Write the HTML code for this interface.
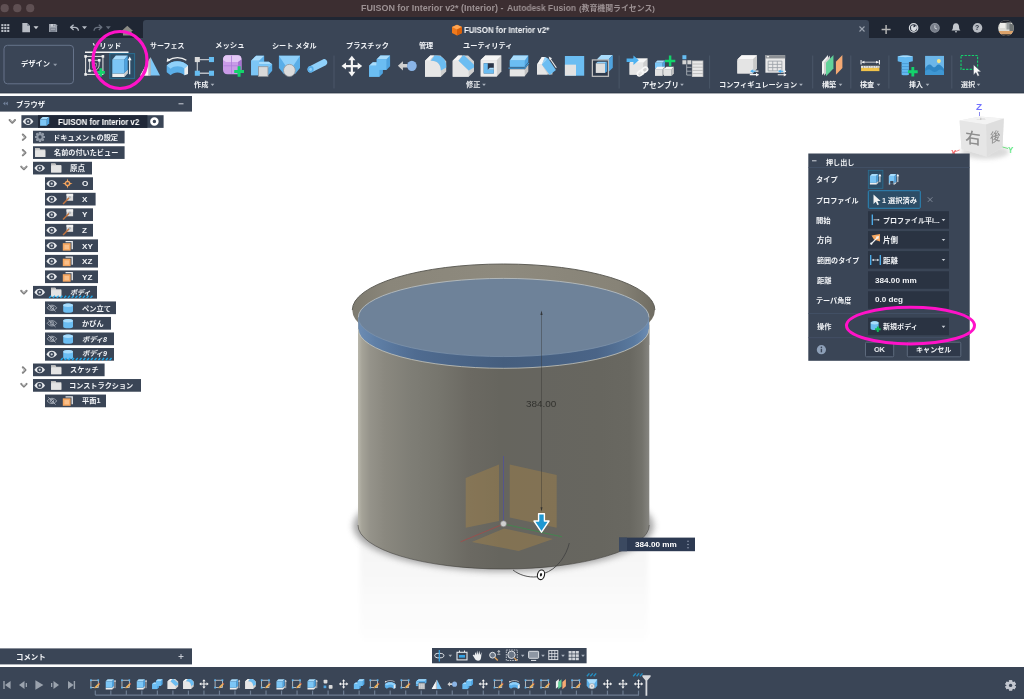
<!DOCTYPE html>
<html lang="ja"><head><meta charset="utf-8"><title>FUISON for Interior v2* (Interior) - Autodesk Fusion</title>
<style>
html,body{margin:0;padding:0;background:#fff;}
body{width:1024px;height:699px;overflow:hidden;position:relative;font-family:"Liberation Sans","Noto Sans CJK JP",sans-serif;}
#app{position:absolute;left:0;top:0;width:1024px;height:699px;overflow:hidden;background:#fff;}
.t{will-change:transform;}
svg.l{position:absolute;left:0;top:0;will-change:transform;}
.t{position:absolute;white-space:nowrap;letter-spacing:0;}
</style></head><body><div id="app">
<svg class="l" width="1024" height="699" viewBox="0 0 1024 699">
<defs>
<linearGradient id="gb" gradientUnits="userSpaceOnUse" x1="357.5" x2="649.5" y1="0" y2="0"><stop offset="0.0017" stop-color="#b9b7ac"/><stop offset="0.0154" stop-color="#a5a398"/><stop offset="0.0428" stop-color="#95938a"/><stop offset="0.0942" stop-color="#8a887f"/><stop offset="0.1798" stop-color="#7f7e76"/><stop offset="0.2825" stop-color="#76756d"/><stop offset="0.3853" stop-color="#6b6962"/><stop offset="0.4880" stop-color="#66655e"/><stop offset="0.6250" stop-color="#66655f"/><stop offset="0.8305" stop-color="#67665f"/><stop offset="0.9332" stop-color="#696861"/><stop offset="0.9743" stop-color="#73726b"/><stop offset="0.9993" stop-color="#868580"/></linearGradient>
<linearGradient id="gband" gradientUnits="userSpaceOnUse" x1="358" x2="649" y1="0" y2="0"><stop offset="0" stop-color="#6d8db4"/><stop offset="0.06" stop-color="#5f7fa6"/><stop offset="0.2" stop-color="#4f6b90"/><stop offset="0.5" stop-color="#455e7e"/><stop offset="0.82" stop-color="#4a6487"/><stop offset="0.95" stop-color="#5a7a9f"/><stop offset="1" stop-color="#6d8db4"/></linearGradient>
<linearGradient id="grim" gradientUnits="userSpaceOnUse" x1="352" x2="655" y1="0" y2="0">
<stop offset="0" stop-color="#7d7a6f"/><stop offset="0.12" stop-color="#8a867a"/><stop offset="0.5" stop-color="#8e8a7e"/><stop offset="0.88" stop-color="#878377"/><stop offset="1" stop-color="#6f6c62"/>
</linearGradient>
<linearGradient id="gr" x1="0" x2="0" y1="0" y2="1"><stop offset="0" stop-color="#f4f4f4"/><stop offset="0.5" stop-color="#f8f8f8"/><stop offset="1" stop-color="#fefefe"/></linearGradient>
<filter id="bl" x="-20%" y="-20%" width="140%" height="140%"><feGaussianBlur stdDeviation="3"/></filter>
<filter id="bl2" x="-30%" y="-30%" width="160%" height="160%"><feGaussianBlur stdDeviation="2"/></filter>
</defs>
<rect x="0" y="0" width="1024" height="17" fill="#3c2e31" />
<circle cx="4.7" cy="8.2" r="4.1" fill="#5f5053"/>
<circle cx="17.3" cy="8.2" r="4.1" fill="#5f5053"/>
<circle cx="30.2" cy="8.2" r="4.1" fill="#5f5053"/>
<rect x="0" y="17" width="1024" height="21" fill="#1f2633" />
<path d="M143 38v-15a3 3 0 0 1 3-3h720a3 3 0 0 1 3 3v15z" fill="#3a4556"/>
<rect x="1.3" y="24.1" width="2.1" height="2.1" fill="#b9bec6" />
<rect x="1.3" y="27.0" width="2.1" height="2.1" fill="#b9bec6" />
<rect x="1.3" y="29.9" width="2.1" height="2.1" fill="#b9bec6" />
<rect x="4.25" y="24.1" width="2.1" height="2.1" fill="#b9bec6" />
<rect x="4.25" y="27.0" width="2.1" height="2.1" fill="#b9bec6" />
<rect x="4.25" y="29.9" width="2.1" height="2.1" fill="#b9bec6" />
<rect x="7.2" y="24.1" width="2.1" height="2.1" fill="#b9bec6" />
<rect x="7.2" y="27.0" width="2.1" height="2.1" fill="#b9bec6" />
<rect x="7.2" y="29.9" width="2.1" height="2.1" fill="#b9bec6" />
<path d="M22.3 23.1h4.800l2.900 2.900v6.300h-7.700z" fill="#b7bcc4"/><path d="M27.100 23.100v2.900h2.900z" fill="#7f8794"/>
<path d="M33.5 26.2h5l-2.5 3z" fill="#c8ccd2"/>
<path d="M49 24h6.900l1.200 1.200v6.700h-8.100z" fill="#9aa0aa"/><rect x="50.700" y="24" width="4.300" height="2.600" fill="#c9cdd3"/><rect x="53.300" y="24.400" width="1.100" height="1.800" fill="#6a7180"/><rect x="50.300" y="28" width="5.500" height="3.900" fill="#7b828f"/><rect x="51" y="28.800" width="4.100" height=".8" fill="#b7bcc4"/>
<path d="M73.600 24.700l-3 2.600 3 2.600M71 27.300h3.600c2.200 0 3.600 1.200 3.800 3.400" fill="none" stroke="#b4bac3" stroke-width="1.300" stroke-linejoin="round"/>
<path d="M82.0 26.2h5l-2.5 3z" fill="#b4bac3"/>
<path d="M98.800 24.700l3 2.600-3 2.600M101.400 27.300h-3.600c-2.200 0-3.600 1.200-3.800 3.400" fill="none" stroke="#68707e" stroke-width="1.300" stroke-linejoin="round"/>
<path d="M105.8 26.2h5l-2.5 3z" fill="#646c7a"/>
<path d="M121.500 31l5.800-5.300 5.800 5.300h-1.500v4.500h-8.600v-4.500z" fill="#8b8b84"/>
<g transform="translate(452 24.5) scale(1)"><path d="M0 2.600l5-2.400 5 2.400v5.800l-5 2.600-5-2.600z" fill="#f07a1c"/><path d="M0 2.600l5-2.400 5 2.400-5 2.500z" fill="#ffa552"/><path d="M5 5.100l5-2.500v5.800l-5 2.600z" fill="#d8600a"/></g>
<path d="M859.500 26.500l5 5M864.500 26.500l-5 5" stroke="#9aa2ae" stroke-width="1.100"/>
<path d="M881.6 29.500h9M886.100 25v9" stroke="#b4b4b4" stroke-width="1.500"/>
<circle cx="913.6" cy="27.900" r="4.200" fill="#2a3240" stroke="#d8dbe0" stroke-width="1.200"/><path d="M911 26.500c.8-1.200 1.800-1.500 2.800-1l-.6 1.800 1.800-.4.900-1.600c1 .900 1.300 2.200.8 3.600l-1.700 1.900c-1.500.6-2.900.200-3.800-1z" fill="#d8dbe0"/>
<circle cx="934.9" cy="27.900" r="4.300" fill="#767c88" stroke="#8d939d" stroke-width="1.100"/><path d="M934.900 25.300v2.900l2.100.8" stroke="#c9cdd3" stroke-width="1" fill="none"/>
<path d="M956 23.300c2.300 0 3.100 1.900 3.100 4.100c0 1.500.7 2.300 1.400 3h-9c.7-.7 1.400-1.500 1.400-3c0-2.200.8-4.100 3.100-4.100z" fill="#c3c7cd"/><rect x="955.100" y="30.900" width="1.800" height="1.500" rx=".7" fill="#c3c7cd"/>
<circle cx="977.5" cy="27.900" r="4.800" fill="#b7bbc2"/>
<clipPath id="av"><circle cx="1006" cy="28.100" r="7.900"/></clipPath><g clip-path="url(#av)"><rect x="998" y="20" width="16" height="17" fill="#dcdcd6"/><rect x="998" y="20" width="16" height="2.800" fill="#1d2027"/><rect x="1006.500" y="22.500" width="4.500" height="7" fill="#9a9f9f"/><rect x="1000" y="23" width="5" height="5" fill="#eeeeea"/><rect x="1009.500" y="24" width="4.500" height="7" fill="#6f7474"/><rect x="998" y="31" width="16" height="3.600" fill="#dba26a"/><rect x="998" y="34.300" width="16" height="3" fill="#2a2624"/></g>
<rect x="0" y="38" width="1024" height="55" fill="#3a4556" />
<rect x="0" y="92.6" width="1024" height="0.8" fill="#2a3342" />
<rect x="4" y="45.300" width="69.500" height="38.500" rx="3.500" fill="none" stroke="#66738a" stroke-width="1"/>
<path d="M53.2 63.8h4l-2.0 2.4z" fill="#8e98a6"/>
<rect x="85" y="51.5" width="43.5" height="1.5" fill="#f5f5f5" />
<rect x="109.800" y="53.600" width="24.800" height="24.800" fill="#2d4d66" stroke="#2b6f92" stroke-width="1"/>
<g transform="translate(84.00 54.80) scale(0.9952 1.0000)"><rect x="1.600" y="1.600" width="17.400" height="18" fill="none" stroke="#dcdcdc" stroke-width="1.100"/><path d="M5.500 5.500h9.800v4.500a6 6 0 0 1-6 6h-3.800z" fill="none" stroke="#c4c8cc" stroke-width="1"/><path d="M8.500 8.500h4v2a2.500 2.500 0 0 1-2.500 2.500h-1.500z" fill="none" stroke="#aeb3b9" stroke-width=".800"/><rect x="0.30000000000000004" y="0.30000000000000004" width="2.600" height="2.600" fill="#f2f2f2"/><rect x="17.7" y="0.30000000000000004" width="2.600" height="2.600" fill="#f2f2f2"/><rect x="0.30000000000000004" y="18.3" width="2.600" height="2.600" fill="#f2f2f2"/><rect x="4.2" y="4.2" width="2.600" height="2.600" fill="#f2f2f2"/><rect x="14.0" y="4.2" width="2.600" height="2.600" fill="#f2f2f2"/><rect x="4.2" y="14.7" width="2.600" height="2.600" fill="#f2f2f2"/><path d="M12.600 17.600h8.400M16.800 13.400v8.400" stroke="#13d36b" stroke-width="2.700"/></g>
<g transform="translate(110.20 54.63) scale(0.9554 1.0918)"><path d="M2.2 17.2h12.4l3.6-3.4v3.2l-3.6 3.4h-12.4z" fill="#efefef"/><path d="M14.6 17.2l3.6-3.4v3.2l-3.6 3.4z" fill="#c9c9c9"/><path d="M2.2 4.6l3.7 -3.7h12.4l-3.7 3.7z" fill="#a9dcfb"/><path d="M14.600000000000001 4.6l3.7 -3.7v12.6l-3.7 3.7z" fill="#4fa3df"/><rect x="2.2" y="4.6" width="12.4" height="12.6" fill="#7cc6f6"/><path d="M20.4 4v14" stroke="#fff" stroke-width="1.2"/><path d="M20.4 1.8l2 3.4h-4z" fill="#fff"/></g>
<g transform="translate(139.26 55.11) scale(0.9429 0.9946)"><path d="M12 2.2L1 20.6h11z" fill="#ececec"/><path d="M9.6 6.4L1 20.6h8.6z" fill="#f7f7f7"/><path d="M12 2.2l10 18.4h-10z" fill="#7cc6f6"/><path d="M9.6 6.2v14.4h2.4v-18.4z" fill="#b7bcc2"/></g>
<g transform="translate(166.09 55.69) scale(1.0143 1.0110)"><path d="M0.600 9.800C6 4.200 16 4.200 21.600 9.800V18L18 19.300C14.500 15.800 8 15.800 4.500 19.300L0.600 16.500Z" fill="#5aaee8"/><path d="M0.600 9.800C6 4.200 16 4.200 21.600 9.800L18 12.600C14.500 9.800 8 9.800 4.500 12.800Z" fill="#8fd0fa"/><path d="M18 12.600L21.600 9.800V18L18 19.300Z" fill="#ececec"/><path d="M2.200 4.600C7.500 0.900 15 0.900 20 4.600" fill="none" stroke="#f2f2f2" stroke-width="1.200"/><path d="M0.500 6.200l.8-3.900 3.100 2.500z" fill="#f2f2f2"/></g>
<g transform="translate(193.83 55.04) scale(0.9697 0.9792)"><path d="M3.6 4.6h15M3.6 18.6h15M3.6 4.6v14" stroke="#b9bec5" stroke-width="1.3" fill="none"/><rect x="1" y="2" width="5.2" height="5.2" fill="#dadada"/><rect x="15.6" y="2" width="5.2" height="5.2" fill="#66bdf2"/><rect x="1" y="16" width="5.2" height="5.2" fill="#66bdf2"/><rect x="15.6" y="16" width="5.2" height="5.2" fill="#66bdf2"/></g>
<g transform="translate(222.00 53.08) scale(1.0000 1.0588)"><path d="M5 2h10.5c2.6 0 4 1.4 4 4v9c0 3-1.6 5-4.6 5h-9.400c-3 0-4.500-1.600-4.500-4.500v-9c0-3 1.500-4.500 4-4.500z" fill="#c99be8"/><path d="M5 2h10.500c2.600 0 4 1.400 4 4l-3.500 2.500h-12l-3-2c0-3 1.500-4.500 4-4.500z" fill="#e3c8f5"/><path d="M16 8.5l3.500-2.500v9c0 3-1.600 5-4.600 5l1.100-2z" fill="#a874d2"/><path d="M9.500 2.500v17M1.500 12h17" stroke="#b07fdc" stroke-width=".8" fill="none"/><path d="M12.200 17.400h9.800M17.100 12.500v9.800" stroke="#13d36b" stroke-width="3"/></g>
<g transform="translate(250.60 55.20) scale(1.0047 1.0000)"><path d="M0.500 5.500l5-5h8v6h4.500l3.500 2.500v6.500l-4 4.500h-17z" fill="#5aaee8"/><path d="M0.500 5.500l5-5h8l-5 5z" fill="#a9dcfb"/><path d="M8.500 6.500h9.500l3.500 2.500h-14z" fill="#a9dcfb"/><path d="M0.500 5.500h8v3.500h13l-4 4h-10v7h-7z" fill="#7cc6f6"/><rect x="7.800" y="11.500" width="9.500" height="9.700" fill="#d9d9d9" stroke="#8f959c" stroke-width=".800"/></g>
<g transform="translate(278.41 54.17) scale(0.9815 1.0190)"><path d="M0.500 1.500h21.500v12l-5 6h-11.500l-5-6z" fill="#5aaee8"/><path d="M0.500 1.500h21.500l-7 10h-7.500z" fill="#8fd0fa"/><circle cx="11.200" cy="16" r="6" fill="#dcdcdc" stroke="#8f959c" stroke-width=".8"/></g>
<g transform="translate(305.82 52.47) scale(1.0474 1.0538)"><path d="M3.200 13.200l13.500-6.700c2.800-1.300 5.600 3.600 2.400 5.600l-13.300 6.700c-3.600 1.500-5.800-3.600-2.600-5.600z" fill="#8fd0fa"/><ellipse cx="4.600" cy="16" rx="2.900" ry="3.100" fill="#5aaee8"/><ellipse cx="4.600" cy="16" rx="1.300" ry="1.500" fill="#8fd0fa"/></g>
<g transform="translate(341.01 55.21) scale(0.9856 0.9856)"><path d="M11 0.500l3.600 4.600h-2.500v4.800h4.800v-2.500l4.600 3.600-4.600 3.600v-2.500h-4.800v4.800h2.500l-3.600 4.600-3.600-4.600h2.500v-4.800h-4.800v2.500l-4.600-3.600 4.600-3.600v2.500h4.800v-4.800h-2.500z" fill="#f5f5f5"/></g>
<g transform="translate(367.97 54.19) scale(1.0291 1.0095)"><path d="M8.500 5l3.600-3.600h9.400v10.600l-3.600 3.600h-3.400v3.400l-3.400 3.400h-10v-11l3.600-3.400h3.800z" fill="#4fa3df"/><path d="M8.500 5l3.600-3.600h9.400l-3.600 3.600z" fill="#a9dcfb"/><path d="M1.100 11.400l3.600-3.400h3.800v3.400z" fill="#a9dcfb"/><rect x="8.500" y="5" width="9.400" height="10.600" fill="#6bbdf2"/><rect x="1.100" y="11.400" width="10" height="11" fill="#6bbdf2"/></g>
<g transform="translate(397.45 55.16) scale(0.9126 0.9722)"><path d="M0.500 11l5.500-4.800v3h5v3.600h-5v3z" fill="#d0d0d0"/><circle cx="15.800" cy="11" r="5.300" fill="#8ab4e6"/></g>
<g transform="translate(423.94 54.57) scale(1.0600 1.0291)"><path d="M1 6l5-5h9.500l5.500 5.500v10l-5 5h-15z" fill="#cfcfcf"/><path d="M1 6l5-5h4c-3 2-4 4-4 5z" fill="#f6f6f6"/><path d="M1 6h5.500c5 0 9.500 3 9.500 9v6.500h-15z" fill="#e6e6e6"/><path d="M10 1h1.500c6 0 9.500 4.500 9.500 10v1.500l-5 3c0-6-3.500-10-9.500-9.500z" fill="#6bbdf2"/></g>
<g transform="translate(451.63 54.57) scale(1.0650 1.0291)"><path d="M1 6l5-5h9.500l5.500 5.500v10l-5 5h-15z" fill="#cfcfcf"/><path d="M1 6l5-5h4l-4 5z" fill="#f6f6f6"/><path d="M1 6h5.500l9.500 9.500v6h-15z" fill="#e6e6e6"/><path d="M10.500 1h1.500l9 9v2.500l-5 3-9.500-9.500z" fill="#6bbdf2"/></g>
<g transform="translate(479.69 54.48) scale(1.0097 1.0243)"><path d="M1 5.500l4.500-4.500h16v15.500l-4.500 5h-16z" fill="#d0d0d0"/><path d="M1 5.500l4.500-4.500h16l-4.500 4.500z" fill="#f6f6f6"/><rect x="1" y="5.500" width="16" height="16" fill="#ececec"/><rect x="4" y="8.500" width="10" height="10" fill="#2b3547"/><path d="M4 8.500h4v6.500h6v3.500h-10z" fill="#6bbdf2"/><path d="M8 15l2-2h4v2z" fill="#a9dcfb"/></g>
<g transform="translate(508.94 54.01) scale(0.9009 1.0612)"><path d="M1 6l4-4.500h16.500l-0 6-4 4.500h-16.500z" fill="#4fa3df"/><path d="M1 6l4-4.500h16.500l-4 4.500z" fill="#a9dcfb"/><rect x="1" y="6" width="16.500" height="6" fill="#6bbdf2"/><path d="M1 14.500h16.500l4-4.500v6.500l-4 4.500h-16.500z" fill="#c4c4c4"/><rect x="1" y="14.500" width="16.500" height="6.500" fill="#e6e6e6"/><path d="M-0.500 13.300h18l4.600-5" stroke="#3f9ad8" stroke-width="1.200" fill="none"/></g>
<g transform="translate(537.00 56.17) scale(0.8795 0.8318)"><path d="M0 10l5.500-9h4l8 14v7h-17.500z" fill="#d2d2d2"/><path d="M0 10l5.500-9h3.500l-3.500 9z" fill="#f6f6f6"/><path d="M0 10h5.500l6.500 12h-12z" fill="#e6e6e6"/><path d="M5.500 10l7-7.500 9 14-7 6z" fill="#6bbdf2"/><path d="M5.500 10l3.500-9 3.500 1.500z" fill="#8fd0fa"/><path d="M14.500 2.500l7.500 11.500" stroke="#f2f2f2" stroke-width="1.200"/><path d="M13.300 0.300l3.800 2.300-2.600 1.900z" fill="#f2f2f2"/></g>
<g transform="translate(563.93 55.04) scale(0.9650 0.9612)"><rect x="1" y="1" width="20" height="20.500" fill="#6bbdf2"/><rect x="1" y="10" width="11.500" height="11.500" fill="#e2e2e2"/></g>
<g transform="translate(591.41 54.61) scale(0.9722 0.9649)"><path d="M6 4.5l4 -4h12l-4 4z" fill="#a9dcfb"/><path d="M18 4.5l4 -4v13l-4 4z" fill="#4fa3df"/><rect x="6" y="4.5" width="12" height="13" fill="#7cc6f6"/><rect x="1" y="5.500" width="16.500" height="17" fill="#2f3a4b" stroke="#bfbfbf" stroke-width="1.300"/><rect x="4.500" y="9" width="9.500" height="10" fill="#dedede"/><path d="M14 9l2-1.500v10l-2 1.500z" fill="#4fa3df"/><path d="M4.500 9l2-1.500h9.500l-2 1.500z" fill="#8fd0fa"/></g>
<g transform="translate(626.60 54.54) scale(0.9777 0.9591)"><path d="M3 8.500l4.500-4.500h14v12.500l-4.500 4.500h-14z" fill="#cfcfcf"/><path d="M3 8.500l4.500-4.500h14l-4.500 4.500z" fill="#f6f6f6"/><rect x="3" y="8.500" width="14" height="12.500" fill="#e6e6e6"/><path d="M0 4.200h7v-3.200l5.500 5-5.500 5v-3.200h-7z" fill="#4fb2f0"/><g fill="none" stroke="#f7f7f7" stroke-width="1.700"><ellipse cx="14" cy="19.500" rx="3.300" ry="2.300" transform="rotate(-38 14 19.500)"/><ellipse cx="18.500" cy="16" rx="3.300" ry="2.300" transform="rotate(-38 18.500 16)"/></g></g>
<g transform="translate(654.06 55.11) scale(0.9444 0.9670)"><path d="M1 8l2.5 -2.5h8l-2.5 2.5z" fill="#a9dcfb"/><path d="M9 8l2.5 -2.5v6l-2.5 2.5z" fill="#4fa3df"/><rect x="1" y="8" width="8" height="6" fill="#7cc6f6"/><path d="M1 14.5l2.5 -2.5h8l-2.5 2.5z" fill="#f6f6f6"/><path d="M9 14.5l2.5 -2.5v7l-2.5 2.5z" fill="#c4c4c4"/><rect x="1" y="14.5" width="8" height="7" fill="#e2e2e2"/><path d="M10.5 14.5l2.5 -2.5h8l-2.5 2.5z" fill="#f6f6f6"/><path d="M18.5 14.5l2.5 -2.5v7l-2.5 2.5z" fill="#c4c4c4"/><rect x="10.5" y="14.5" width="8" height="7" fill="#e2e2e2"/><path d="M11.500 6h11M17 0.500v11" stroke="#13d36b" stroke-width="2.600"/></g>
<g transform="translate(681.92 54.71) scale(0.9505 0.9690)"><rect x="0.500" y="0.500" width="4.200" height="4.200" fill="#66bdf2"/><rect x="0.500" y="5.700" width="4.200" height="4.200" fill="#d6d6d6"/><rect x="5.700" y="5.700" width="4.200" height="4.200" fill="#d6d6d6"/><path d="M5 10v11M5 13h5M5 17h5M5 21h5" stroke="#aeb4bb" stroke-width=".900" fill="none"/><rect x="10.500" y="6" width="12" height="17" fill="#bdbdbd"/><rect x="11.300" y="6.8" width="10.400" height="2.300" fill="#e8e8e8"/><rect x="11.300" y="10.1" width="10.400" height="2.300" fill="#e8e8e8"/><rect x="11.300" y="13.399999999999999" width="10.400" height="2.300" fill="#e8e8e8"/><rect x="11.300" y="16.7" width="10.400" height="2.300" fill="#e8e8e8"/><rect x="11.300" y="20.0" width="10.400" height="2.300" fill="#e8e8e8"/></g>
<g transform="translate(736.34 53.78) scale(0.9598 0.9430)"><path d="M1 6l4.500-4.500h16v14.500l-4.500 5h-16z" fill="#c9c9c9"/><path d="M1 6l4.500-4.500h16l-4.500 4.500z" fill="#f8f8f8"/><path d="M3 6c0 0 0 0 0 0h14.500v15h-16.500v-13c0-1.500 1-2 2-2z" fill="#e4e4e4"/><path d="M14 18.500h9M14 22.200h9" stroke="#f2f2f2" stroke-width="1.300"/><path d="M17.500 16.500l-3 2 3 2z" fill="#4fb2f0"/><path d="M20.500 20.200l3 2-3 2z" fill="#f2f2f2"/><path d="M15 18.500h5" stroke="#4fb2f0" stroke-width="1.300"/></g>
<g transform="translate(764.93 54.17) scale(0.9174 0.9267)"><rect x="0.500" y="1" width="21.500" height="19" fill="#e9e9e9"/><rect x="0.500" y="1" width="21.500" height="3.600" fill="#8b8f94"/><rect x="2" y="2" width="2.500" height="1.400" fill="#e9e9e9"/><path d="M3.500 7.500h15v10.500h-15zM3.500 11h15M3.500 14.500h15M8.500 7.500v10.500M13.500 7.500v10.500" stroke="#9a9fa6" stroke-width=".900" fill="none"/><path d="M14 18.500h9M14 22.200h9" stroke="#f2f2f2" stroke-width="1.300"/><path d="M17.500 16.500l-3 2 3 2z" fill="#4fb2f0"/><path d="M20.500 20.200l3 2-3 2z" fill="#f2f2f2"/><path d="M15 18.500h5" stroke="#4fb2f0" stroke-width="1.300"/></g>
<g transform="translate(821.50 54.14) scale(0.9951 0.9587)"><path d="M0.500 8l6-7v14l-6 7z" fill="#f4f4f4"/><path d="M2.500 8.500l6-7v14l-6 7z" fill="#d0d0d0"/><path d="M4.500 9l7.500-8v14l-7.500 8z" fill="#62d29a"/><path d="M14.500 8l6.500-7v13.500l-6.500 7z" fill="#f5a973"/></g>
<g transform="translate(860.11 57.25) scale(0.9653 0.7500)"><rect x="1" y="11.500" width="19" height="7" fill="#f0c24a"/><rect x="1" y="11.500" width="19" height="2.600" fill="#e3e6ea"/><path d="M3.500 11.500v3M6 11.500v2M8.500 11.500v3M11 11.500v2M13.500 11.500v3M16 11.500v2M18.500 11.500v3" stroke="#6b7078" stroke-width=".600"/><path d="M1 3.500v6M20 3.500v6M2 6.500h17" stroke="#f2f2f2" stroke-width="1.100" fill="none"/><path d="M1.500 6.500l3-1.800v3.600zM19.500 6.500l-3-1.800v3.600z" fill="#f2f2f2"/></g>
<g transform="translate(896.72 54.92) scale(0.9757 0.9679)"><path d="M1 1.500c4-1.200 11-1.200 15.500 0v5c-1.500.5-3 .6-4 .8v13.200c-2 .8-6 .8-7.500 0v-13.200c-1.200-.1-3-.3-4-.8z" fill="#63b8f0"/><path d="M1 1.500c4-1.200 11-1.200 15.500 0c-4.500 1.200-11 1.200-15.500 0z" fill="#a9dcfb"/><path d="M5 9h7.500M5 12h7.500M5 15h7.500M5 18h7.500" stroke="#3f90cc" stroke-width=".700"/><path d="M11.500 17.400h10M16.500 12.400v10" stroke="#13d36b" stroke-width="2.900"/></g>
<g transform="translate(924.64 54.97) scale(0.9009 0.9272)"><rect x="0.500" y="1" width="21" height="20.500" fill="#6cb6e8"/><path d="M0.500 21.500v-7c2.500-4 5-5.500 7.500-3c2 2 3 2.500 5 0c2.500-2.500 5-1 8.500 3.500v6.500z" fill="#2f86c4"/><path d="M0.500 21.500v-4c3-2.500 5.500-2.500 8 0c2.500 1.500 4.500 1 6.500-1c2-1.500 4-1 6.500 1.500v3.500z" fill="#3f97d3"/><circle cx="15.800" cy="6.600" r="2.200" fill="#f4e58a"/></g>
<g transform="translate(959.98 54.46) scale(0.8719 0.8926)"><rect x="1.200" y="1.200" width="19" height="15.500" fill="none" stroke="#13d36b" stroke-width="1.300" stroke-dasharray="2.600 1.500"/><path d="M15.500 11.500v11.500l2.800-2.700 1.900 4.200 2-.9-1.900-4.100h4z" fill="#fafafa" stroke="#3a4556" stroke-width=".500"/></g>
<rect x="333.5" y="55.5" width="1" height="33" fill="#4a5668" />
<rect x="618.6" y="55.5" width="1" height="33" fill="#4a5668" />
<rect x="709.1" y="55.5" width="1" height="33" fill="#4a5668" />
<rect x="812.2" y="55.5" width="1" height="33" fill="#4a5668" />
<rect x="850.3" y="55.5" width="1" height="33" fill="#4a5668" />
<rect x="888.4" y="55.5" width="1" height="33" fill="#4a5668" />
<rect x="951.3" y="55.5" width="1" height="33" fill="#4a5668" />
<path d="M210.7 83.7h3.6l-1.8 2.2z" fill="#aab2bd"/>
<path d="M482.2 83.7h3.6l-1.8 2.2z" fill="#aab2bd"/>
<path d="M680.2 83.7h3.6l-1.8 2.2z" fill="#aab2bd"/>
<path d="M799.2 83.7h3.6l-1.8 2.2z" fill="#aab2bd"/>
<path d="M838.7 83.7h3.6l-1.8 2.2z" fill="#aab2bd"/>
<path d="M876.7 83.7h3.6l-1.8 2.2z" fill="#aab2bd"/>
<path d="M925.7 83.7h3.6l-1.8 2.2z" fill="#aab2bd"/>
<path d="M976.7 83.7h3.6l-1.8 2.2z" fill="#aab2bd"/>
<rect x="0" y="96" width="192" height="15.6" fill="#3a4556" />
<path d="M5.300 101.600v3.800l-2.300-1.900zM7.800 101.600v3.800l-2.300-1.900z" fill="#71809a"/>
<rect x="178.5" y="103.3" width="5" height="1" fill="#c9ced6" />
<rect x="21.4" y="115.2" width="142.2" height="12.7" fill="#3a4556" />
<path d="M9.599999999999998 120.05l2.7 2.700 2.700-2.700" stroke="#7d7d7d" stroke-width="2" fill="none" stroke-linejoin="round" stroke-linecap="round"/><path d="M10.099999999999998 119.94999999999999l2.200 2.200 2.200-2.200" stroke="#d9d9d9" stroke-width=".6" fill="none"/>
<g transform="translate(22.80 116.30) scale(0.8833 0.8750)"><path d="M0 6c3-5.300 9-5.300 12 0c-3 5.300-9 5.300-12 0z" fill="#e9ebee"/><circle cx="6" cy="6" r="2.900" fill="#3a4556"/><circle cx="6" cy="6" r="1.250" fill="#c9ced6"/></g>
<rect x="38" y="115.2" width="109.4" height="12.7" fill="#202838" />
<g transform="translate(39.67 116.53) scale(0.8304 0.8036)"><path d="M0.5 3.5l3 -3h8l-3 3z" fill="#a9dcfb"/><path d="M8.5 3.5l3 -3v8l-3 3z" fill="#4fa3df"/><rect x="0.5" y="3.5" width="8" height="8" fill="#7cc6f6"/></g>
<circle cx="154.4" cy="121.55" r="3" fill="none" stroke="#fff" stroke-width="2.5"/>
<rect x="33" y="130.72" width="91.6" height="12.7" fill="#3a4556" />
<path d="M22.8 134.47l2.700 2.700-2.700 2.700" stroke="#7d7d7d" stroke-width="2" fill="none" stroke-linejoin="round" stroke-linecap="round"/><path d="M22.7 134.97l2.200 2.200-2.200 2.200" stroke="#d9d9d9" stroke-width=".6" fill="none"/>
<g transform="translate(35.00 131.97) scale(0.8333 0.8333)"><g fill="#8f98a5"><rect x="4.700" y="0" width="2.600" height="12" rx=".500" transform="rotate(0 6 6)"/><rect x="4.700" y="0" width="2.600" height="12" rx=".500" transform="rotate(45 6 6)"/><rect x="4.700" y="0" width="2.600" height="12" rx=".500" transform="rotate(90 6 6)"/><rect x="4.700" y="0" width="2.600" height="12" rx=".500" transform="rotate(135 6 6)"/><rect x="4.700" y="0" width="2.600" height="12" rx=".500" transform="rotate(180 6 6)"/><rect x="4.700" y="0" width="2.600" height="12" rx=".500" transform="rotate(225 6 6)"/><rect x="4.700" y="0" width="2.600" height="12" rx=".500" transform="rotate(270 6 6)"/><rect x="4.700" y="0" width="2.600" height="12" rx=".500" transform="rotate(315 6 6)"/><circle cx="6" cy="6" r="4.400"/></g><circle cx="6" cy="6" r="2" fill="#3a4556"/></g>
<rect x="33" y="146.24" width="91.6" height="12.7" fill="#3a4556" />
<path d="M22.8 149.99l2.700 2.700-2.700 2.700" stroke="#7d7d7d" stroke-width="2" fill="none" stroke-linejoin="round" stroke-linecap="round"/><path d="M22.7 150.49l2.200 2.200-2.200 2.200" stroke="#d9d9d9" stroke-width=".6" fill="none"/>
<g transform="translate(34.63 146.70) scale(0.9286 0.9184)"><path d="M0.500 1.500h4.500l1 1.600h5.500v8h-11z" fill="#d8d8d8"/><path d="M0.500 4.200h11v6.900h-11z" fill="#e4e4e4"/><path d="M0.500 1.500h4.500l1 1.600h-5.500z" fill="#bdbdbd"/></g>
<rect x="33" y="161.76" width="59" height="12.7" fill="#3a4556" />
<path d="M21.2 166.60999999999999l2.7 2.700 2.700-2.700" stroke="#7d7d7d" stroke-width="2" fill="none" stroke-linejoin="round" stroke-linecap="round"/><path d="M21.7 166.51l2.200 2.200 2.200-2.200" stroke="#d9d9d9" stroke-width=".6" fill="none"/>
<g transform="translate(34.40 162.86) scale(0.8833 0.8750)"><path d="M0 6c3-5.300 9-5.300 12 0c-3 5.300-9 5.300-12 0z" fill="#e9ebee"/><circle cx="6" cy="6" r="2.900" fill="#3a4556"/><circle cx="6" cy="6" r="1.250" fill="#c9ced6"/></g>
<g transform="translate(50.63 162.22) scale(0.9286 0.9184)"><path d="M0.500 1.500h4.500l1 1.600h5.500v8h-11z" fill="#d8d8d8"/><path d="M0.500 4.200h11v6.900h-11z" fill="#e4e4e4"/><path d="M0.500 1.500h4.500l1 1.600h-5.500z" fill="#bdbdbd"/></g>
<rect x="45" y="177.28" width="48" height="12.7" fill="#3a4556" />
<g transform="translate(46.40 178.38) scale(0.8833 0.8750)"><path d="M0 6c3-5.300 9-5.300 12 0c-3 5.300-9 5.300-12 0z" fill="#e9ebee"/><circle cx="6" cy="6" r="2.900" fill="#3a4556"/><circle cx="6" cy="6" r="1.250" fill="#c9ced6"/></g>
<g transform="translate(62.33 178.46) scale(0.8621 0.8448)"><path d="M6 0l1.300 4.700 4.700 1.300-4.700 1.300-1.300 4.700-1.300-4.700-4.700-1.300 4.700-1.300z" fill="#f5a660"/><circle cx="6" cy="6" r="2.700" fill="none" stroke="#f5a660" stroke-width="1.200"/><circle cx="6" cy="6" r="1.500" fill="#3a4556"/></g>
<rect x="45" y="192.8" width="50.6" height="12.7" fill="#3a4556" />
<g transform="translate(46.40 193.90) scale(0.8833 0.8750)"><path d="M0 6c3-5.300 9-5.300 12 0c-3 5.300-9 5.300-12 0z" fill="#e9ebee"/><circle cx="6" cy="6" r="2.900" fill="#3a4556"/><circle cx="6" cy="6" r="1.250" fill="#c9ced6"/></g>
<g transform="translate(62.31 193.38) scale(0.9386 0.9224)"><rect x="4.500" y="0.500" width="7" height="7.500" fill="#dcdcdc"/><rect x="4.500" y="0.500" width="7" height="2.500" fill="#efefef"/><path d="M0.800 11.500l7.200-7.500" stroke="#c0733f" stroke-width="1.600"/><circle cx="8" cy="4.200" r="1.300" fill="#b4b9bf"/></g>
<rect x="45" y="208.32" width="48" height="12.7" fill="#3a4556" />
<g transform="translate(46.40 209.42) scale(0.8833 0.8750)"><path d="M0 6c3-5.300 9-5.300 12 0c-3 5.300-9 5.300-12 0z" fill="#e9ebee"/><circle cx="6" cy="6" r="2.900" fill="#3a4556"/><circle cx="6" cy="6" r="1.250" fill="#c9ced6"/></g>
<g transform="translate(62.31 208.90) scale(0.9386 0.9224)"><rect x="4.500" y="0.500" width="7" height="7.500" fill="#dcdcdc"/><rect x="4.500" y="0.500" width="7" height="2.500" fill="#efefef"/><path d="M0.800 11.500l7.200-7.500" stroke="#c0733f" stroke-width="1.600"/><circle cx="8" cy="4.200" r="1.300" fill="#b4b9bf"/></g>
<rect x="45" y="223.84" width="48" height="12.7" fill="#3a4556" />
<g transform="translate(46.40 224.94) scale(0.8833 0.8750)"><path d="M0 6c3-5.300 9-5.300 12 0c-3 5.300-9 5.300-12 0z" fill="#e9ebee"/><circle cx="6" cy="6" r="2.900" fill="#3a4556"/><circle cx="6" cy="6" r="1.250" fill="#c9ced6"/></g>
<g transform="translate(62.31 224.42) scale(0.9386 0.9224)"><rect x="4.500" y="0.500" width="7" height="7.500" fill="#dcdcdc"/><rect x="4.500" y="0.500" width="7" height="2.500" fill="#efefef"/><path d="M0.800 11.500l7.200-7.500" stroke="#c0733f" stroke-width="1.600"/><circle cx="8" cy="4.200" r="1.300" fill="#b4b9bf"/></g>
<rect x="45" y="239.36" width="53" height="12.7" fill="#3a4556" />
<g transform="translate(46.40 240.46) scale(0.8833 0.8750)"><path d="M0 6c3-5.300 9-5.300 12 0c-3 5.300-9 5.300-12 0z" fill="#e9ebee"/><circle cx="6" cy="6" r="2.900" fill="#3a4556"/><circle cx="6" cy="6" r="1.250" fill="#c9ced6"/></g>
<g transform="translate(62.33 240.57) scale(0.9196 0.8596)"><path d="M3.500 0.500h8v9.500h-1.500v-8h-6.500z" fill="#e8e8e8"/><rect x="0.500" y="3" width="8.500" height="8.700" fill="#f5a660"/><rect x="2.300" y="5" width="5" height="5" fill="#f9c08b"/></g>
<rect x="45" y="254.88" width="53" height="12.7" fill="#3a4556" />
<g transform="translate(46.40 255.98) scale(0.8833 0.8750)"><path d="M0 6c3-5.300 9-5.300 12 0c-3 5.300-9 5.300-12 0z" fill="#e9ebee"/><circle cx="6" cy="6" r="2.900" fill="#3a4556"/><circle cx="6" cy="6" r="1.250" fill="#c9ced6"/></g>
<g transform="translate(62.33 256.09) scale(0.9196 0.8596)"><path d="M3.500 0.500h8v9.500h-1.500v-8h-6.500z" fill="#e8e8e8"/><rect x="0.500" y="3" width="8.500" height="8.700" fill="#f5a660"/><rect x="2.300" y="5" width="5" height="5" fill="#f9c08b"/></g>
<rect x="45" y="270.4" width="53" height="12.7" fill="#3a4556" />
<g transform="translate(46.40 271.50) scale(0.8833 0.8750)"><path d="M0 6c3-5.300 9-5.300 12 0c-3 5.300-9 5.300-12 0z" fill="#e9ebee"/><circle cx="6" cy="6" r="2.900" fill="#3a4556"/><circle cx="6" cy="6" r="1.250" fill="#c9ced6"/></g>
<g transform="translate(62.33 271.61) scale(0.9196 0.8596)"><path d="M3.500 0.500h8v9.500h-1.500v-8h-6.500z" fill="#e8e8e8"/><rect x="0.500" y="3" width="8.500" height="8.700" fill="#f5a660"/><rect x="2.300" y="5" width="5" height="5" fill="#f9c08b"/></g>
<rect x="33" y="285.92" width="64" height="12.7" fill="#3a4556" />
<path d="M21.2 290.77000000000004l2.7 2.700 2.700-2.700" stroke="#7d7d7d" stroke-width="2" fill="none" stroke-linejoin="round" stroke-linecap="round"/><path d="M21.7 290.6700000000001l2.200 2.200 2.200-2.200" stroke="#d9d9d9" stroke-width=".6" fill="none"/>
<g transform="translate(34.40 287.02) scale(0.8833 0.8750)"><path d="M0 6c3-5.300 9-5.300 12 0c-3 5.300-9 5.300-12 0z" fill="#e9ebee"/><circle cx="6" cy="6" r="2.900" fill="#3a4556"/><circle cx="6" cy="6" r="1.250" fill="#c9ced6"/></g>
<g transform="translate(50.63 286.38) scale(0.9286 0.9184)"><path d="M0.500 1.500h4.500l1 1.600h5.500v8h-11z" fill="#d8d8d8"/><path d="M0.500 4.200h11v6.900h-11z" fill="#e4e4e4"/><path d="M0.500 1.500h4.500l1 1.600h-5.500z" fill="#bdbdbd"/></g>
<rect x="45" y="301.44" width="71" height="12.7" fill="#3a4556" />
<g transform="translate(46.80 303.46) scale(0.8583 0.7255)"><path d="M0.500 6c2.800-4.800 8.200-4.800 11 0c-2.800 4.800-8.200 4.800-11 0z" fill="none" stroke="#b4bac5" stroke-width="1"/><circle cx="6" cy="6" r="2.100" fill="none" stroke="#b4bac5" stroke-width="1"/><path d="M1.800 1.200l8.400 9.800" stroke="#b4bac5" stroke-width="1.100"/></g>
<g transform="translate(62.22 303.05) scale(0.9800 0.8545)"><path d="M1 2.500c0-2.600 10-2.600 10 0v7c0 2.600-10 2.600-10 0z" fill="#6bbdf2"/><ellipse cx="6" cy="2.500" rx="5" ry="2" fill="#a9dcfb"/></g>
<rect x="45" y="316.96" width="66" height="12.7" fill="#3a4556" />
<g transform="translate(46.80 318.98) scale(0.8583 0.7255)"><path d="M0.500 6c2.800-4.800 8.200-4.800 11 0c-2.800 4.800-8.200 4.800-11 0z" fill="none" stroke="#b4bac5" stroke-width="1"/><circle cx="6" cy="6" r="2.100" fill="none" stroke="#b4bac5" stroke-width="1"/><path d="M1.800 1.200l8.400 9.800" stroke="#b4bac5" stroke-width="1.100"/></g>
<g transform="translate(62.22 318.57) scale(0.9800 0.8545)"><path d="M1 2.500c0-2.600 10-2.600 10 0v7c0 2.600-10 2.600-10 0z" fill="#6bbdf2"/><ellipse cx="6" cy="2.500" rx="5" ry="2" fill="#a9dcfb"/></g>
<rect x="45" y="332.48" width="69" height="12.7" fill="#3a4556" />
<g transform="translate(46.80 334.50) scale(0.8583 0.7255)"><path d="M0.500 6c2.800-4.800 8.200-4.800 11 0c-2.800 4.800-8.200 4.800-11 0z" fill="none" stroke="#b4bac5" stroke-width="1"/><circle cx="6" cy="6" r="2.100" fill="none" stroke="#b4bac5" stroke-width="1"/><path d="M1.800 1.200l8.400 9.800" stroke="#b4bac5" stroke-width="1.100"/></g>
<g transform="translate(62.22 334.09) scale(0.9800 0.8545)"><path d="M1 2.500c0-2.600 10-2.600 10 0v7c0 2.600-10 2.600-10 0z" fill="#6bbdf2"/><ellipse cx="6" cy="2.500" rx="5" ry="2" fill="#a9dcfb"/></g>
<rect x="45" y="348.0" width="69" height="12.7" fill="#3a4556" />
<g transform="translate(46.40 349.10) scale(0.8833 0.8750)"><path d="M0 6c3-5.300 9-5.300 12 0c-3 5.300-9 5.300-12 0z" fill="#e9ebee"/><circle cx="6" cy="6" r="2.900" fill="#3a4556"/><circle cx="6" cy="6" r="1.250" fill="#c9ced6"/></g>
<g transform="translate(62.22 349.61) scale(0.9800 0.8545)"><path d="M1 2.500c0-2.600 10-2.600 10 0v7c0 2.600-10 2.600-10 0z" fill="#6bbdf2"/><ellipse cx="6" cy="2.500" rx="5" ry="2" fill="#a9dcfb"/></g>
<rect x="33" y="363.52" width="71.6" height="12.7" fill="#3a4556" />
<path d="M22.8 367.27000000000004l2.700 2.700-2.700 2.700" stroke="#7d7d7d" stroke-width="2" fill="none" stroke-linejoin="round" stroke-linecap="round"/><path d="M22.7 367.77000000000004l2.200 2.200-2.200 2.200" stroke="#d9d9d9" stroke-width=".6" fill="none"/>
<g transform="translate(34.40 364.62) scale(0.8833 0.8750)"><path d="M0 6c3-5.300 9-5.300 12 0c-3 5.300-9 5.300-12 0z" fill="#e9ebee"/><circle cx="6" cy="6" r="2.900" fill="#3a4556"/><circle cx="6" cy="6" r="1.250" fill="#c9ced6"/></g>
<g transform="translate(50.63 363.98) scale(0.9286 0.9184)"><path d="M0.500 1.500h4.500l1 1.600h5.500v8h-11z" fill="#d8d8d8"/><path d="M0.500 4.200h11v6.900h-11z" fill="#e4e4e4"/><path d="M0.500 1.500h4.500l1 1.600h-5.500z" fill="#bdbdbd"/></g>
<rect x="33" y="379.04" width="108" height="12.7" fill="#3a4556" />
<path d="M21.2 383.89l2.7 2.700 2.700-2.700" stroke="#7d7d7d" stroke-width="2" fill="none" stroke-linejoin="round" stroke-linecap="round"/><path d="M21.7 383.79l2.200 2.200 2.200-2.200" stroke="#d9d9d9" stroke-width=".6" fill="none"/>
<g transform="translate(34.40 380.14) scale(0.8833 0.8750)"><path d="M0 6c3-5.300 9-5.300 12 0c-3 5.300-9 5.300-12 0z" fill="#e9ebee"/><circle cx="6" cy="6" r="2.900" fill="#3a4556"/><circle cx="6" cy="6" r="1.250" fill="#c9ced6"/></g>
<g transform="translate(50.63 379.50) scale(0.9286 0.9184)"><path d="M0.500 1.500h4.500l1 1.600h5.500v8h-11z" fill="#d8d8d8"/><path d="M0.500 4.200h11v6.900h-11z" fill="#e4e4e4"/><path d="M0.500 1.500h4.500l1 1.600h-5.500z" fill="#bdbdbd"/></g>
<rect x="45" y="394.56" width="61" height="12.7" fill="#3a4556" />
<g transform="translate(46.80 396.58) scale(0.8583 0.7255)"><path d="M0.500 6c2.800-4.800 8.200-4.800 11 0c-2.800 4.800-8.200 4.800-11 0z" fill="none" stroke="#b4bac5" stroke-width="1"/><circle cx="6" cy="6" r="2.100" fill="none" stroke="#b4bac5" stroke-width="1"/><path d="M1.800 1.200l8.400 9.800" stroke="#b4bac5" stroke-width="1.100"/></g>
<g transform="translate(62.33 395.77) scale(0.9196 0.8596)"><path d="M3.500 0.500h8v9.500h-1.500v-8h-6.500z" fill="#e8e8e8"/><rect x="0.500" y="3" width="8.500" height="8.700" fill="#f5a660"/><rect x="2.300" y="5" width="5" height="5" fill="#f9c08b"/></g>
<path d="M49.20 297.90l2-2.200" stroke="#1fa8ea" stroke-width="1.400"/>
<path d="M52.95 297.90l2-2.200" stroke="#1fa8ea" stroke-width="1.400"/>
<path d="M56.70 297.90l2-2.200" stroke="#1fa8ea" stroke-width="1.400"/>
<path d="M60.45 297.90l2-2.200" stroke="#1fa8ea" stroke-width="1.400"/>
<path d="M64.20 297.90l2-2.200" stroke="#1fa8ea" stroke-width="1.400"/>
<path d="M67.95 297.90l2-2.200" stroke="#1fa8ea" stroke-width="1.400"/>
<path d="M71.70 297.90l2-2.200" stroke="#1fa8ea" stroke-width="1.400"/>
<path d="M75.45 297.90l2-2.200" stroke="#1fa8ea" stroke-width="1.400"/>
<path d="M79.20 297.90l2-2.200" stroke="#1fa8ea" stroke-width="1.400"/>
<path d="M82.95 297.90l2-2.200" stroke="#1fa8ea" stroke-width="1.400"/>
<path d="M86.70 297.90l2-2.200" stroke="#1fa8ea" stroke-width="1.400"/>
<path d="M90.45 297.90l2-2.200" stroke="#1fa8ea" stroke-width="1.400"/>
<path d="M60.80 360.20l2-2.200" stroke="#1fa8ea" stroke-width="1.400"/>
<path d="M64.55 360.20l2-2.200" stroke="#1fa8ea" stroke-width="1.400"/>
<path d="M68.30 360.20l2-2.200" stroke="#1fa8ea" stroke-width="1.400"/>
<path d="M72.05 360.20l2-2.200" stroke="#1fa8ea" stroke-width="1.400"/>
<path d="M75.80 360.20l2-2.200" stroke="#1fa8ea" stroke-width="1.400"/>
<path d="M79.55 360.20l2-2.200" stroke="#1fa8ea" stroke-width="1.400"/>
<path d="M83.30 360.20l2-2.200" stroke="#1fa8ea" stroke-width="1.400"/>
<path d="M87.05 360.20l2-2.200" stroke="#1fa8ea" stroke-width="1.400"/>
<path d="M90.80 360.20l2-2.200" stroke="#1fa8ea" stroke-width="1.400"/>
<path d="M94.55 360.20l2-2.200" stroke="#1fa8ea" stroke-width="1.400"/>
<path d="M98.30 360.20l2-2.200" stroke="#1fa8ea" stroke-width="1.400"/>
<path d="M102.05 360.20l2-2.200" stroke="#1fa8ea" stroke-width="1.400"/>
<path d="M105.80 360.20l2-2.200" stroke="#1fa8ea" stroke-width="1.400"/>
<path d="M109.55 360.20l2-2.200" stroke="#1fa8ea" stroke-width="1.400"/>
<rect x="0" y="648.4" width="192" height="16" fill="#3a4556" />
<path d="M178.500 656.500h5M181 654v5" stroke="#c9ced6" stroke-width="1"/>
<rect x="0" y="667" width="1024" height="32" fill="#3a4556" />
<path d="M3.300 681h1.400v8h-1.400zM10.600 681v8l-5.600-4z" fill="#9aa2ad"/>
<path d="M24.500 681v8l-5.500-4zM25.700 683h1.300v4h-1.300z" fill="#9aa2ad"/>
<path d="M35.400 680.200l8 4.800-8 4.800z" fill="#9aa2ad"/>
<path d="M53.500 681v8l5.500-4zM51 683h1.300v4h-1.300z" fill="#9aa2ad"/>
<path d="M68 681v8l5.600-4zM73.700 681h1.400v8h-1.400z" fill="#9aa2ad"/>
<path d="M95.3 695.1H639.00" stroke="#6e7d92" stroke-width="1.2"/>
<path d="M95.30 690.600v4.500" stroke="#6e7d92" stroke-width="1.2"/>
<g transform="translate(90.01 679.01) scale(0.4591 0.4895)"><rect x="2" y="2.5" width="16" height="15" fill="none" stroke="#d8d8d8" stroke-width="1.6"/><rect x="0.19999999999999996" y="0.7" width="3.6" height="3.6" fill="#5bb4ee"/><rect x="16.2" y="0.7" width="3.6" height="3.6" fill="#5bb4ee"/><rect x="0.19999999999999996" y="15.7" width="3.6" height="3.6" fill="#5bb4ee"/><path d="M9.5 19.5l1.2-3.6 7.6-7.2 2.6 2.6-7.6 7.2z" fill="#f0b35a"/><path d="M18.3 8.7l1.3-1.2 2.6 2.6-1.3 1.2z" fill="#e2574c"/><path d="M9.5 19.5l.9-2.6 1.8 1.8z" fill="#333"/></g>
<path d="M110.82 690.600v4.500" stroke="#6e7d92" stroke-width="1.2"/>
<g transform="translate(104.60 678.89) scale(0.5099 0.5153)"><path d="M2.2 17.2h12.4l3.6-3.4v3.2l-3.6 3.4h-12.4z" fill="#efefef"/><path d="M14.6 17.2l3.6-3.4v3.2l-3.6 3.4z" fill="#c9c9c9"/><path d="M2.2 4.6l3.7 -3.7h12.4l-3.7 3.7z" fill="#a9dcfb"/><path d="M14.600000000000001 4.6l3.7 -3.7v12.6l-3.7 3.7z" fill="#4fa3df"/><rect x="2.2" y="4.6" width="12.4" height="12.6" fill="#7cc6f6"/><path d="M20.4 4v14" stroke="#fff" stroke-width="1.2"/><path d="M20.4 1.8l2 3.4h-4z" fill="#fff"/></g>
<path d="M126.34 690.600v4.500" stroke="#6e7d92" stroke-width="1.2"/>
<g transform="translate(121.05 679.01) scale(0.4591 0.4895)"><rect x="2" y="2.5" width="16" height="15" fill="none" stroke="#d8d8d8" stroke-width="1.6"/><rect x="0.19999999999999996" y="0.7" width="3.6" height="3.6" fill="#5bb4ee"/><rect x="16.2" y="0.7" width="3.6" height="3.6" fill="#5bb4ee"/><rect x="0.19999999999999996" y="15.7" width="3.6" height="3.6" fill="#5bb4ee"/><path d="M9.5 19.5l1.2-3.6 7.6-7.2 2.6 2.6-7.6 7.2z" fill="#f0b35a"/><path d="M18.3 8.7l1.3-1.2 2.6 2.6-1.3 1.2z" fill="#e2574c"/><path d="M9.5 19.5l.9-2.6 1.8 1.8z" fill="#333"/></g>
<path d="M141.86 690.600v4.500" stroke="#6e7d92" stroke-width="1.2"/>
<g transform="translate(135.64 678.89) scale(0.5099 0.5153)"><path d="M2.2 17.2h12.4l3.6-3.4v3.2l-3.6 3.4h-12.4z" fill="#efefef"/><path d="M14.6 17.2l3.6-3.4v3.2l-3.6 3.4z" fill="#c9c9c9"/><path d="M2.2 4.6l3.7 -3.7h12.4l-3.7 3.7z" fill="#a9dcfb"/><path d="M14.600000000000001 4.6l3.7 -3.7v12.6l-3.7 3.7z" fill="#4fa3df"/><rect x="2.2" y="4.6" width="12.4" height="12.6" fill="#7cc6f6"/><path d="M20.4 4v14" stroke="#fff" stroke-width="1.2"/><path d="M20.4 1.8l2 3.4h-4z" fill="#fff"/></g>
<path d="M157.38 690.600v4.500" stroke="#6e7d92" stroke-width="1.2"/>
<g transform="translate(151.57 678.65) scale(0.5146 0.4667)"><path d="M8.500 5l3.600-3.600h9.400v10.600l-3.600 3.600h-3.400v3.400l-3.400 3.400h-10v-11l3.600-3.400h3.800z" fill="#4fa3df"/><path d="M8.500 5l3.600-3.600h9.400l-3.600 3.600z" fill="#a9dcfb"/><path d="M1.100 11.400l3.600-3.400h3.800v3.400z" fill="#a9dcfb"/><rect x="8.500" y="5" width="9.400" height="10.600" fill="#6bbdf2"/><rect x="1.100" y="11.400" width="10" height="11" fill="#6bbdf2"/></g>
<path d="M172.90 690.600v4.500" stroke="#6e7d92" stroke-width="1.2"/>
<g transform="translate(167.07 678.40) scale(0.5300 0.4951)"><path d="M1 6l5-5h9.500l5.500 5.500v10l-5 5h-15z" fill="#cfcfcf"/><path d="M1 6l5-5h4l-4 5z" fill="#f6f6f6"/><path d="M1 6h5.500l9.500 9.500v6h-15z" fill="#e6e6e6"/><path d="M10.500 1h1.500l9 9v2.500l-5 3-9.500-9.500z" fill="#6bbdf2"/></g>
<path d="M188.42 690.600v4.500" stroke="#6e7d92" stroke-width="1.2"/>
<g transform="translate(182.59 678.40) scale(0.5300 0.4951)"><path d="M1 6l5-5h9.500l5.500 5.500v10l-5 5h-15z" fill="#cfcfcf"/><path d="M1 6l5-5h4c-3 2-4 4-4 5z" fill="#f6f6f6"/><path d="M1 6h5.500c5 0 9.500 3 9.500 9v6.500h-15z" fill="#e6e6e6"/><path d="M10 1h1.500c6 0 9.500 4.500 9.500 10v1.500l-5 3c0-6-3.500-10-9.500-9.500z" fill="#6bbdf2"/></g>
<path d="M203.94 690.600v4.500" stroke="#6e7d92" stroke-width="1.2"/>
<g transform="translate(198.97 679.03) scale(0.4519 0.4471)"><path d="M11 0.500l3.600 4.600h-2.500v4.800h4.800v-2.500l4.600 3.600-4.600 3.600v-2.500h-4.800v4.800h2.500l-3.600 4.600-3.600-4.600h2.500v-4.800h-4.800v2.500l-4.600-3.600 4.600-3.600v2.500h4.800v-4.800h-2.500z" fill="#f5f5f5"/></g>
<path d="M219.46 690.600v4.500" stroke="#6e7d92" stroke-width="1.2"/>
<g transform="translate(214.17 679.01) scale(0.4591 0.4895)"><rect x="2" y="2.5" width="16" height="15" fill="none" stroke="#d8d8d8" stroke-width="1.6"/><rect x="0.19999999999999996" y="0.7" width="3.6" height="3.6" fill="#5bb4ee"/><rect x="16.2" y="0.7" width="3.6" height="3.6" fill="#5bb4ee"/><rect x="0.19999999999999996" y="15.7" width="3.6" height="3.6" fill="#5bb4ee"/><path d="M9.5 19.5l1.2-3.6 7.6-7.2 2.6 2.6-7.6 7.2z" fill="#f0b35a"/><path d="M18.3 8.7l1.3-1.2 2.6 2.6-1.3 1.2z" fill="#e2574c"/><path d="M9.5 19.5l.9-2.6 1.8 1.8z" fill="#333"/></g>
<path d="M234.98 690.600v4.500" stroke="#6e7d92" stroke-width="1.2"/>
<g transform="translate(228.76 678.89) scale(0.5099 0.5153)"><path d="M2.2 17.2h12.4l3.6-3.4v3.2l-3.6 3.4h-12.4z" fill="#efefef"/><path d="M14.6 17.2l3.6-3.4v3.2l-3.6 3.4z" fill="#c9c9c9"/><path d="M2.2 4.6l3.7 -3.7h12.4l-3.7 3.7z" fill="#a9dcfb"/><path d="M14.600000000000001 4.6l3.7 -3.7v12.6l-3.7 3.7z" fill="#4fa3df"/><rect x="2.2" y="4.6" width="12.4" height="12.6" fill="#7cc6f6"/><path d="M20.4 4v14" stroke="#fff" stroke-width="1.2"/><path d="M20.4 1.8l2 3.4h-4z" fill="#fff"/></g>
<path d="M250.50 690.600v4.500" stroke="#6e7d92" stroke-width="1.2"/>
<g transform="translate(244.67 678.40) scale(0.5300 0.4951)"><path d="M1 6l5-5h9.500l5.500 5.500v10l-5 5h-15z" fill="#cfcfcf"/><path d="M1 6l5-5h4c-3 2-4 4-4 5z" fill="#f6f6f6"/><path d="M1 6h5.500c5 0 9.500 3 9.500 9v6.500h-15z" fill="#e6e6e6"/><path d="M10 1h1.500c6 0 9.500 4.500 9.500 10v1.500l-5 3c0-6-3.500-10-9.500-9.500z" fill="#6bbdf2"/></g>
<path d="M266.02 690.600v4.500" stroke="#6e7d92" stroke-width="1.2"/>
<g transform="translate(260.73 679.01) scale(0.4591 0.4895)"><rect x="2" y="2.5" width="16" height="15" fill="none" stroke="#d8d8d8" stroke-width="1.6"/><rect x="0.19999999999999996" y="0.7" width="3.6" height="3.6" fill="#5bb4ee"/><rect x="16.2" y="0.7" width="3.6" height="3.6" fill="#5bb4ee"/><rect x="0.19999999999999996" y="15.7" width="3.6" height="3.6" fill="#5bb4ee"/><path d="M9.5 19.5l1.2-3.6 7.6-7.2 2.6 2.6-7.6 7.2z" fill="#f0b35a"/><path d="M18.3 8.7l1.3-1.2 2.6 2.6-1.3 1.2z" fill="#e2574c"/><path d="M9.5 19.5l.9-2.6 1.8 1.8z" fill="#333"/></g>
<path d="M281.54 690.600v4.500" stroke="#6e7d92" stroke-width="1.2"/>
<g transform="translate(275.32 678.89) scale(0.5099 0.5153)"><path d="M2.2 17.2h12.4l3.6-3.4v3.2l-3.6 3.4h-12.4z" fill="#efefef"/><path d="M14.6 17.2l3.6-3.4v3.2l-3.6 3.4z" fill="#c9c9c9"/><path d="M2.2 4.6l3.7 -3.7h12.4l-3.7 3.7z" fill="#a9dcfb"/><path d="M14.600000000000001 4.6l3.7 -3.7v12.6l-3.7 3.7z" fill="#4fa3df"/><rect x="2.2" y="4.6" width="12.4" height="12.6" fill="#7cc6f6"/><path d="M20.4 4v14" stroke="#fff" stroke-width="1.2"/><path d="M20.4 1.8l2 3.4h-4z" fill="#fff"/></g>
<path d="M297.06 690.600v4.500" stroke="#6e7d92" stroke-width="1.2"/>
<g transform="translate(291.77 679.01) scale(0.4591 0.4895)"><rect x="2" y="2.5" width="16" height="15" fill="none" stroke="#d8d8d8" stroke-width="1.6"/><rect x="0.19999999999999996" y="0.7" width="3.6" height="3.6" fill="#5bb4ee"/><rect x="16.2" y="0.7" width="3.6" height="3.6" fill="#5bb4ee"/><rect x="0.19999999999999996" y="15.7" width="3.6" height="3.6" fill="#5bb4ee"/><path d="M9.5 19.5l1.2-3.6 7.6-7.2 2.6 2.6-7.6 7.2z" fill="#f0b35a"/><path d="M18.3 8.7l1.3-1.2 2.6 2.6-1.3 1.2z" fill="#e2574c"/><path d="M9.5 19.5l.9-2.6 1.8 1.8z" fill="#333"/></g>
<path d="M312.58 690.600v4.500" stroke="#6e7d92" stroke-width="1.2"/>
<g transform="translate(306.36 678.89) scale(0.5099 0.5153)"><path d="M2.2 17.2h12.4l3.6-3.4v3.2l-3.6 3.4h-12.4z" fill="#efefef"/><path d="M14.6 17.2l3.6-3.4v3.2l-3.6 3.4z" fill="#c9c9c9"/><path d="M2.2 4.6l3.7 -3.7h12.4l-3.7 3.7z" fill="#a9dcfb"/><path d="M14.600000000000001 4.6l3.7 -3.7v12.6l-3.7 3.7z" fill="#4fa3df"/><rect x="2.2" y="4.6" width="12.4" height="12.6" fill="#7cc6f6"/><path d="M20.4 4v14" stroke="#fff" stroke-width="1.2"/><path d="M20.4 1.8l2 3.4h-4z" fill="#fff"/></g>
<path d="M328.10 690.600v4.500" stroke="#6e7d92" stroke-width="1.2"/>
<g transform="translate(321.97 678.64) scale(0.5422 0.5294)"><rect x="3" y="2" width="7" height="7" rx="1.500" fill="#dadada"/><rect x="12.500" y="12" width="7" height="7" rx="1.500" fill="#dadada"/><rect x="3" y="13" width="5" height="5" fill="#4fa3df"/></g>
<path d="M343.62 690.600v4.500" stroke="#6e7d92" stroke-width="1.2"/>
<g transform="translate(338.65 679.03) scale(0.4519 0.4471)"><path d="M11 0.500l3.600 4.600h-2.500v4.800h4.800v-2.500l4.600 3.600-4.600 3.600v-2.500h-4.800v4.800h2.500l-3.600 4.600-3.600-4.600h2.500v-4.800h-4.800v2.500l-4.600-3.600 4.600-3.600v2.500h4.800v-4.800h-2.500z" fill="#f5f5f5"/></g>
<path d="M359.14 690.600v4.500" stroke="#6e7d92" stroke-width="1.2"/>
<g transform="translate(353.33 678.65) scale(0.5146 0.4667)"><path d="M8.500 5l3.600-3.600h9.400v10.600l-3.600 3.600h-3.400v3.400l-3.400 3.400h-10v-11l3.600-3.400h3.800z" fill="#4fa3df"/><path d="M8.500 5l3.600-3.600h9.400l-3.600 3.600z" fill="#a9dcfb"/><path d="M1.100 11.400l3.600-3.400h3.800v3.400z" fill="#a9dcfb"/><rect x="8.500" y="5" width="9.400" height="10.600" fill="#6bbdf2"/><rect x="1.100" y="11.400" width="10" height="11" fill="#6bbdf2"/></g>
<path d="M374.66 690.600v4.500" stroke="#6e7d92" stroke-width="1.2"/>
<g transform="translate(369.37 679.01) scale(0.4591 0.4895)"><rect x="2" y="2.5" width="16" height="15" fill="none" stroke="#d8d8d8" stroke-width="1.6"/><rect x="0.19999999999999996" y="0.7" width="3.6" height="3.6" fill="#5bb4ee"/><rect x="16.2" y="0.7" width="3.6" height="3.6" fill="#5bb4ee"/><rect x="0.19999999999999996" y="15.7" width="3.6" height="3.6" fill="#5bb4ee"/><path d="M9.5 19.5l1.2-3.6 7.6-7.2 2.6 2.6-7.6 7.2z" fill="#f0b35a"/><path d="M18.3 8.7l1.3-1.2 2.6 2.6-1.3 1.2z" fill="#e2574c"/><path d="M9.5 19.5l.9-2.6 1.8 1.8z" fill="#333"/></g>
<path d="M390.18 690.600v4.500" stroke="#6e7d92" stroke-width="1.2"/>
<g transform="translate(384.58 679.64) scale(0.5048 0.4670)"><path d="M0.600 9.800C6 4.200 16 4.200 21.600 9.800V18L18 19.300C14.500 15.800 8 15.800 4.500 19.300L0.600 16.500Z" fill="#5aaee8"/><path d="M0.600 9.800C6 4.200 16 4.200 21.600 9.800L18 12.600C14.500 9.800 8 9.800 4.500 12.800Z" fill="#8fd0fa"/><path d="M18 12.600L21.600 9.800V18L18 19.300Z" fill="#ececec"/><path d="M2.200 4.600C7.500 0.900 15 0.900 20 4.600" fill="none" stroke="#f2f2f2" stroke-width="1.200"/><path d="M0.500 6.200l.8-3.900 3.100 2.500z" fill="#f2f2f2"/></g>
<path d="M405.70 690.600v4.500" stroke="#6e7d92" stroke-width="1.2"/>
<g transform="translate(400.41 679.01) scale(0.4591 0.4895)"><rect x="2" y="2.5" width="16" height="15" fill="none" stroke="#d8d8d8" stroke-width="1.6"/><rect x="0.19999999999999996" y="0.7" width="3.6" height="3.6" fill="#5bb4ee"/><rect x="16.2" y="0.7" width="3.6" height="3.6" fill="#5bb4ee"/><rect x="0.19999999999999996" y="15.7" width="3.6" height="3.6" fill="#5bb4ee"/><path d="M9.5 19.5l1.2-3.6 7.6-7.2 2.6 2.6-7.6 7.2z" fill="#f0b35a"/><path d="M18.3 8.7l1.3-1.2 2.6 2.6-1.3 1.2z" fill="#e2574c"/><path d="M9.5 19.5l.9-2.6 1.8 1.8z" fill="#333"/></g>
<path d="M421.22 690.600v4.500" stroke="#6e7d92" stroke-width="1.2"/>
<g transform="translate(415.36 677.94) scale(0.5579 0.5263)"><path d="M1 7l5-4.500h14v6l-3 3v-3h-11v3z" fill="#5aaee8"/><path d="M1 7l5-4.500h14l-3 3h-11z" fill="#a9dcfb"/><path d="M1 7h5v5.500h-5z" fill="#7cc6f6"/><path d="M1 12.500h5l0 3h-5z" fill="#5aaee8"/><rect x="6" y="10" width="11" height="11" fill="#dcdcdc" stroke="#8f959c" stroke-width=".800"/><path d="M9.500 10v11M13.500 10v11M6 13.500h11M6 17.500h11" stroke="#8f959c" stroke-width=".600"/></g>
<path d="M436.74 690.600v4.500" stroke="#6e7d92" stroke-width="1.2"/>
<g transform="translate(431.26 678.60) scale(0.4762 0.5000)"><path d="M12 2.2L1 20.6h11z" fill="#ececec"/><path d="M9.6 6.4L1 20.6h8.6z" fill="#f7f7f7"/><path d="M12 2.2l10 18.4h-10z" fill="#7cc6f6"/><path d="M9.6 6.2v14.4h2.4v-18.4z" fill="#b7bcc2"/></g>
<path d="M452.26 690.600v4.500" stroke="#6e7d92" stroke-width="1.2"/>
<g transform="translate(447.18 678.70) scale(0.4660 0.5000)"><path d="M0.500 11l5.500-4.800v3h5v3.600h-5v3z" fill="#d0d0d0"/><circle cx="15.800" cy="11" r="5.300" fill="#8ab4e6"/></g>
<path d="M467.78 690.600v4.500" stroke="#6e7d92" stroke-width="1.2"/>
<g transform="translate(461.97 678.65) scale(0.5146 0.4667)"><path d="M8.500 5l3.600-3.600h9.400v10.600l-3.600 3.600h-3.400v3.400l-3.400 3.400h-10v-11l3.600-3.400h3.800z" fill="#4fa3df"/><path d="M8.500 5l3.600-3.600h9.400l-3.600 3.600z" fill="#a9dcfb"/><path d="M1.100 11.400l3.600-3.400h3.800v3.400z" fill="#a9dcfb"/><rect x="8.500" y="5" width="9.400" height="10.600" fill="#6bbdf2"/><rect x="1.100" y="11.400" width="10" height="11" fill="#6bbdf2"/></g>
<path d="M483.30 690.600v4.500" stroke="#6e7d92" stroke-width="1.2"/>
<g transform="translate(478.33 679.03) scale(0.4519 0.4471)"><path d="M11 0.500l3.600 4.600h-2.500v4.800h4.800v-2.500l4.600 3.600-4.600 3.600v-2.500h-4.800v4.800h2.500l-3.600 4.600-3.600-4.600h2.500v-4.800h-4.800v2.500l-4.600-3.600 4.600-3.600v2.500h4.800v-4.800h-2.500z" fill="#f5f5f5"/></g>
<path d="M498.82 690.600v4.500" stroke="#6e7d92" stroke-width="1.2"/>
<g transform="translate(493.53 679.01) scale(0.4591 0.4895)"><rect x="2" y="2.5" width="16" height="15" fill="none" stroke="#d8d8d8" stroke-width="1.6"/><rect x="0.19999999999999996" y="0.7" width="3.6" height="3.6" fill="#5bb4ee"/><rect x="16.2" y="0.7" width="3.6" height="3.6" fill="#5bb4ee"/><rect x="0.19999999999999996" y="15.7" width="3.6" height="3.6" fill="#5bb4ee"/><path d="M9.5 19.5l1.2-3.6 7.6-7.2 2.6 2.6-7.6 7.2z" fill="#f0b35a"/><path d="M18.3 8.7l1.3-1.2 2.6 2.6-1.3 1.2z" fill="#e2574c"/><path d="M9.5 19.5l.9-2.6 1.8 1.8z" fill="#333"/></g>
<path d="M514.34 690.600v4.500" stroke="#6e7d92" stroke-width="1.2"/>
<g transform="translate(508.74 679.64) scale(0.5048 0.4670)"><path d="M0.600 9.800C6 4.200 16 4.200 21.600 9.800V18L18 19.300C14.500 15.800 8 15.800 4.500 19.300L0.600 16.500Z" fill="#5aaee8"/><path d="M0.600 9.800C6 4.200 16 4.200 21.600 9.800L18 12.600C14.500 9.800 8 9.800 4.500 12.800Z" fill="#8fd0fa"/><path d="M18 12.600L21.600 9.800V18L18 19.300Z" fill="#ececec"/><path d="M2.200 4.600C7.500 0.900 15 0.900 20 4.600" fill="none" stroke="#f2f2f2" stroke-width="1.200"/><path d="M0.500 6.200l.8-3.900 3.100 2.500z" fill="#f2f2f2"/></g>
<path d="M529.86 690.600v4.500" stroke="#6e7d92" stroke-width="1.2"/>
<g transform="translate(524.57 679.01) scale(0.4591 0.4895)"><rect x="2" y="2.5" width="16" height="15" fill="none" stroke="#d8d8d8" stroke-width="1.6"/><rect x="0.19999999999999996" y="0.7" width="3.6" height="3.6" fill="#5bb4ee"/><rect x="16.2" y="0.7" width="3.6" height="3.6" fill="#5bb4ee"/><rect x="0.19999999999999996" y="15.7" width="3.6" height="3.6" fill="#5bb4ee"/><path d="M9.5 19.5l1.2-3.6 7.6-7.2 2.6 2.6-7.6 7.2z" fill="#f0b35a"/><path d="M18.3 8.7l1.3-1.2 2.6 2.6-1.3 1.2z" fill="#e2574c"/><path d="M9.5 19.5l.9-2.6 1.8 1.8z" fill="#333"/></g>
<path d="M545.38 690.600v4.500" stroke="#6e7d92" stroke-width="1.2"/>
<g transform="translate(540.09 679.01) scale(0.4591 0.4895)"><rect x="2" y="2.5" width="16" height="15" fill="none" stroke="#d8d8d8" stroke-width="1.6"/><rect x="0.19999999999999996" y="0.7" width="3.6" height="3.6" fill="#5bb4ee"/><rect x="16.2" y="0.7" width="3.6" height="3.6" fill="#5bb4ee"/><rect x="0.19999999999999996" y="15.7" width="3.6" height="3.6" fill="#5bb4ee"/><path d="M9.5 19.5l1.2-3.6 7.6-7.2 2.6 2.6-7.6 7.2z" fill="#f0b35a"/><path d="M18.3 8.7l1.3-1.2 2.6 2.6-1.3 1.2z" fill="#e2574c"/><path d="M9.5 19.5l.9-2.6 1.8 1.8z" fill="#333"/></g>
<path d="M560.90 690.600v4.500" stroke="#6e7d92" stroke-width="1.2"/>
<g transform="translate(554.72 678.51) scale(0.5882 0.4857)"><path d="M2 6l5-5v15l-5 5z" fill="#efefef"/><path d="M6 7l5.500-5.500v15l-5.500 5.500z" fill="#62d29a"/><path d="M13 7l6-6v15l-6 6z" fill="#f5a973"/></g>
<path d="M576.42 690.600v4.500" stroke="#6e7d92" stroke-width="1.2"/>
<g transform="translate(571.13 679.01) scale(0.4591 0.4895)"><rect x="2" y="2.5" width="16" height="15" fill="none" stroke="#d8d8d8" stroke-width="1.6"/><rect x="0.19999999999999996" y="0.7" width="3.6" height="3.6" fill="#5bb4ee"/><rect x="16.2" y="0.7" width="3.6" height="3.6" fill="#5bb4ee"/><rect x="0.19999999999999996" y="15.7" width="3.6" height="3.6" fill="#5bb4ee"/><path d="M9.5 19.5l1.2-3.6 7.6-7.2 2.6 2.6-7.6 7.2z" fill="#f0b35a"/><path d="M18.3 8.7l1.3-1.2 2.6 2.6-1.3 1.2z" fill="#e2574c"/><path d="M9.5 19.5l.9-2.6 1.8 1.8z" fill="#333"/></g>
<path d="M591.94 690.600v4.500" stroke="#6e7d92" stroke-width="1.2"/>
<g transform="translate(586.44 678.20) scale(0.4907 0.5000)"><path d="M0.500 2h21.500v13l-4 5h-13.500l-4-5z" fill="#5aaee8"/><path d="M0.500 2h21.500l-6 9h-9.500z" fill="#a9dcfb"/><circle cx="11.200" cy="16" r="5.500" fill="#e6e6e6" stroke="#8f959c" stroke-width="1"/><circle cx="11.200" cy="16" r="2.200" fill="#b4b9bf"/></g>
<path d="M607.46 690.600v4.500" stroke="#6e7d92" stroke-width="1.2"/>
<g transform="translate(602.49 679.03) scale(0.4519 0.4471)"><path d="M11 0.500l3.600 4.600h-2.500v4.800h4.800v-2.500l4.600 3.600-4.600 3.600v-2.500h-4.800v4.800h2.500l-3.600 4.600-3.600-4.600h2.500v-4.800h-4.800v2.500l-4.600-3.600 4.600-3.600v2.500h4.800v-4.800h-2.500z" fill="#f5f5f5"/></g>
<path d="M622.98 690.600v4.500" stroke="#6e7d92" stroke-width="1.2"/>
<g transform="translate(618.01 679.03) scale(0.4519 0.4471)"><path d="M11 0.500l3.600 4.600h-2.500v4.800h4.800v-2.500l4.600 3.600-4.600 3.600v-2.500h-4.800v4.800h2.500l-3.600 4.600-3.600-4.600h2.500v-4.800h-4.800v2.500l-4.600-3.600 4.600-3.600v2.500h4.800v-4.800h-2.500z" fill="#f5f5f5"/></g>
<path d="M638.50 690.600v4.500" stroke="#6e7d92" stroke-width="1.2"/>
<g transform="translate(633.53 679.03) scale(0.4519 0.4471)"><path d="M11 0.500l3.600 4.600h-2.500v4.800h4.800v-2.500l4.600 3.600-4.600 3.600v-2.500h-4.800v4.800h2.500l-3.600 4.600-3.600-4.600h2.500v-4.800h-4.800v2.500l-4.600-3.600 4.600-3.600v2.500h4.800v-4.800h-2.500z" fill="#f5f5f5"/></g>
<path d="M586.90 676.300l2.500-2.900" stroke="#2490c4" stroke-width="1.400"/>
<path d="M590.30 676.300l2.500-2.900" stroke="#2490c4" stroke-width="1.400"/>
<path d="M593.70 676.300l2.500-2.900" stroke="#2490c4" stroke-width="1.400"/>
<path d="M633.20 676.300l2.500-2.900" stroke="#2490c4" stroke-width="1.400"/>
<path d="M636.60 676.300l2.500-2.900" stroke="#2490c4" stroke-width="1.400"/>
<path d="M640.00 676.300l2.500-2.900" stroke="#2490c4" stroke-width="1.400"/>
<path d="M642.400 675.200h8.200v1.600l-3.300 3.600v15.300h-1.800v-15.300l-3.100-3.600z" fill="#d6d8dc"/>
<g transform="translate(1004.71 679.72) scale(0.9815 0.9464)"><g fill="#c3c7d0"><rect x="4.300" y="0.500" width="3.400" height="11" rx=".600" transform="rotate(0 6 6)"/><rect x="4.300" y="0.500" width="3.400" height="11" rx=".600" transform="rotate(60 6 6)"/><rect x="4.300" y="0.500" width="3.400" height="11" rx=".600" transform="rotate(120 6 6)"/><rect x="4.300" y="0.500" width="3.400" height="11" rx=".600" transform="rotate(180 6 6)"/><rect x="4.300" y="0.500" width="3.400" height="11" rx=".600" transform="rotate(240 6 6)"/><rect x="4.300" y="0.500" width="3.400" height="11" rx=".600" transform="rotate(300 6 6)"/><circle cx="6" cy="6" r="4.100"/></g><circle cx="6" cy="6" r="1.700" fill="#3a4556"/></g>
<rect x="432" y="648" width="154.6" height="15.3" fill="#3a4556" />
<ellipse cx="439.300" cy="655.600" rx="4.600" ry="2.300" fill="none" stroke="#e6e9ed" stroke-width="1"/><path d="M439.300 650v11.500" stroke="#35a4e6" stroke-width="1.200"/>
<path d="M448.5 654.6999999999999h3.6l-1.8 2.2z" fill="#aab2bd"/>
<rect x="457" y="652.300" width="10" height="7.600" fill="none" stroke="#e6e9ed" stroke-width="1.100"/><rect x="459" y="655" width="6" height="2.600" fill="#35a4e6"/><path d="M459.500 652v-1.500M464.500 652v-1.500" stroke="#e6e9ed" stroke-width="1"/>
<path d="M474.500 655.500l1 -3.500 1 3 .6-4.500 1.200 4.300 1-4 1 4.200 1.400-3-.6 5.500c-.3 2.200-1.200 3.200-3 3.200c-1.800 0-2.600-.8-3.400-2.200l-2-3.300c.8-.6 1.400-.3 1.800.3z" fill="#eceff2"/>
<circle cx="492.600" cy="655.200" r="2.900" fill="#6b7686" stroke="#e6e9ed" stroke-width="1"/><path d="M494.800 657.500l3 3" stroke="#e2a25a" stroke-width="1.300"/><path d="M498.800 650.500v3M497.500 652l1.300-1.500 1.300 1.500M497.300 654.300h3" stroke="#e6e9ed" stroke-width=".700" fill="none"/>
<rect x="506.300" y="650" width="11" height="10.500" fill="none" stroke="#e6e9ed" stroke-width=".800" stroke-dasharray="1.500 1"/><circle cx="511.500" cy="654.800" r="3.700" fill="#6b7686" stroke="#e6e9ed" stroke-width=".900"/><path d="M514.300 657.800l2.800 2.800" stroke="#e2a25a" stroke-width="1.200"/>
<path d="M520.9000000000001 654.6999999999999h3.6l-1.8 2.2z" fill="#aab2bd"/>
<rect x="528.600" y="651.300" width="10" height="7" rx=".800" fill="#8e97a4" stroke="#e6e9ed" stroke-width=".900"/><path d="M531 660.400h5.200" stroke="#e6e9ed" stroke-width="1"/>
<path d="M541.2 654.6999999999999h3.6l-1.8 2.2z" fill="#aab2bd"/>
<rect x="548.800" y="650.600" width="9" height="9" fill="none" stroke="#e6e9ed" stroke-width=".900"/><path d="M551.800 650.600v9M554.800 650.600v9M548.800 653.600h9M548.800 656.600h9" stroke="#e6e9ed" stroke-width=".800"/>
<path d="M561.2 654.6999999999999h3.6l-1.8 2.2z" fill="#aab2bd"/>
<rect x="568.6" y="651.0" width="3" height="2.6" fill="#d0d4da" />
<rect x="568.6" y="654.3" width="3" height="2.6" fill="#d0d4da" />
<rect x="568.6" y="657.6" width="3" height="2.6" fill="#d0d4da" />
<rect x="572.2" y="651.0" width="3" height="2.6" fill="#d0d4da" />
<rect x="572.2" y="654.3" width="3" height="2.6" fill="#d0d4da" />
<rect x="572.2" y="657.6" width="3" height="2.6" fill="#d0d4da" />
<rect x="575.8000000000001" y="651.0" width="3" height="2.6" fill="#d0d4da" />
<rect x="575.8000000000001" y="654.3" width="3" height="2.6" fill="#d0d4da" />
<rect x="575.8000000000001" y="657.6" width="3" height="2.6" fill="#d0d4da" />
<path d="M581.2 654.6999999999999h3.6l-1.8 2.2z" fill="#aab2bd"/>
<rect x="360" y="520" width="288" height="122" fill="url(#gr)" filter="url(#bl2)"/>
<ellipse cx="503.5" cy="526" rx="150.5" ry="45.500" fill="#707070" opacity=".6" filter="url(#bl)"/>
<path d="M358 312V525A145.6 44 0 0 0 649.3 525V312z" fill="url(#gb)"/>
<path d="M358 525A145.6 44 0 0 0 649.3 525" fill="none" stroke="#3e3d39" stroke-width=".8" opacity=".7"/>
<ellipse cx="503.6" cy="310" rx="151.3" ry="46" fill="url(#grim)"/>
<path d="M352.3 310A151.3 46 0 0 1 654.9 310" fill="none" stroke="#55534d" stroke-width=".9"/>
<path d="M358 324A145.6 40 0 0 0 649.3 324V345H358z" fill="url(#gb)"/>
<path d="M358.3 317.5v11.7A145.35 39.1 0 0 0 649 329.2v-11.7z" fill="url(#gband)"/>
<path d="M358.3 329.2A145.35 39.1 0 0 0 649 329.2" fill="none" stroke="#c9c9c0" stroke-width=".9" opacity=".85"/>
<ellipse cx="503.65" cy="317.5" rx="145.35" ry="39.1" fill="#6e8299"/>
<path d="M358.3 317.5A145.35 39.1 0 0 1 649 317.5" fill="none" stroke="#b5bcc0" stroke-width=".9"/>
<path d="M358.3 317.5A145.35 39.1 0 0 0 649 317.5" fill="none" stroke="#7f95ae" stroke-width=".7"/>
<path d="M465.7 478L499 464.5V521L465.700 527.7z" fill="#c2913a" opacity=".3"/>
<path d="M509.7 464.5L556.700 475V527.7L509.700 517.6z" fill="#c2913a" opacity=".3"/>
<path d="M471.8 542L504 528.5 553 539 518.700 551z" fill="#c2913a" opacity=".3"/>
<path d="M503.5 456V522" stroke="#4f4f9e" stroke-width=".8" opacity=".9"/>
<path d="M503.5 524L460.6 541.8" stroke="#a84848" stroke-width=".8" opacity=".9"/>
<path d="M503.5 524L562 536.8" stroke="#3a8f4a" stroke-width=".8" opacity=".9"/>
<circle cx="503.5" cy="523.8" r="3" fill="#cfcfcf" stroke="#7a7a7a" stroke-width=".6"/>
<path d="M541.5 314V510" stroke="#2f2f2c" stroke-width=".55" opacity=".7"/>
<path d="M541.5 310.5l1.1 4.600h-2.200zM541.5 511.5l1-4.200h-2z" fill="#2b2b2b" opacity=".85"/>
<path d="M569.3 543c-3 13-12.500 26.500-25.500 30.500M537 576.8c-9 1-18-2-24-6.800" fill="none" stroke="#444" stroke-width=".9"/>
<ellipse cx="541" cy="574.8" rx="3.5" ry="4.9" fill="#fff" stroke="#1c1c1c" stroke-width="1.1" transform="rotate(14 541 574.8)"/><ellipse cx="541" cy="574.8" rx="1.1" ry="1.7" fill="#1c1c1c" transform="rotate(14 541 574.8)"/>
<path d="M538.6 513.8h5.800v7.200h4.600l-7.500 11.200-7.500-11.200h4.600z" fill="#1e98d2" stroke="#fff" stroke-width="1.4" stroke-linejoin="round"/>
<rect x="619" y="537.6" width="76" height="13.6" fill="#2d3a52" />
<rect x="619" y="537.6" width="8" height="13.6" fill="#3b4960" />
<circle cx="688" cy="541.3" r=".800" fill="#8f9aae"/>
<circle cx="688" cy="544.5" r=".800" fill="#8f9aae"/>
<circle cx="688" cy="547.6999999999999" r=".800" fill="#8f9aae"/>
<ellipse cx="985" cy="152" rx="24" ry="7" fill="#bdbdbd" opacity=".550" filter="url(#bl2)"/>
<path d="M959.600 120.500L980 116.500 1003.800 118.500 1002.500 147.500 986.500 156.500 961.500 149z" fill="#e9e9e9"/>
<path d="M959.600 120.500L980 116.500 1003.800 118.500 986 124.500z" fill="#f3f3f3"/>
<path d="M986 124.500L1003.800 118.500 1002.500 147.500 986.500 156.500z" fill="#dedede"/>
<path d="M959.600 120.500L986 124.500 986.500 156.500 961.500 149z" fill="#e6e6e6"/>
<path d="M979.500 112v4" stroke="#8a8af0" stroke-width="1"/><path d="M952 153l7.500-3" stroke="#f07a7a" stroke-width=".900"/><path d="M1002.500 147l5.500 1.500" stroke="#6fe07f" stroke-width="1"/>
<text x="953.7" y="156.4" font-size="9.5" font-weight="700" fill="#f46a6a" text-anchor="middle" font-family="Liberation Sans,sans-serif" transform="translate(953.7 0) scale(.85 1) translate(-953.7 0)">X</text>
<text transform="matrix(1 0.15 0 0.98 973.1 138.2)" font-size="15.5" font-weight="500" fill="#8d8d8d" text-anchor="middle" dominant-baseline="central" font-family="Liberation Sans,Noto Sans CJK JP,sans-serif">右</text>
<text transform="matrix(0.74 -0.233 0 0.98 995.2 137.3)" font-size="13.5" font-weight="500" fill="#8d8d8d" text-anchor="middle" dominant-baseline="central" font-family="Liberation Sans,Noto Sans CJK JP,sans-serif">後</text>
<text transform="matrix(1.5 0 0 0.42 981 119.6)" font-size="6.5" font-weight="500" fill="#bdbdbd" text-anchor="middle" dominant-baseline="central" font-family="Liberation Sans,Noto Sans CJK JP,sans-serif">上</text>
<rect x="808.3" y="153.5" width="161.4" height="207.3" fill="#3a4556" />
<rect x="808.3" y="167.3" width="161.4" height="0.7" fill="#46536a" />
<rect x="812" y="160.3" width="4.5" height="1" fill="#d0d5dc" />
<rect x="868.300" y="170.300" width="14.600" height="18" fill="#2d4d66" stroke="#2b6f92" stroke-width=".800"/>
<g transform="translate(868.76 173.47) scale(0.5182 0.5455)"><path d="M2.200 17.200h12.400l3.600-3.400v3.200l-3.600 3.400h-12.400z" fill="#efefef"/><path d="M14.600 17.200l3.600-3.400v3.200l-3.600 3.400z" fill="#c9c9c9"/><path d="M2.2 4.6l3.7 -3.7h12.4l-3.7 3.7z" fill="#a9dcfb"/><path d="M14.600000000000001 4.6l3.7 -3.7v12.6l-3.7 3.7z" fill="#4fa3df"/><rect x="2.2" y="4.6" width="12.4" height="12.6" fill="#7cc6f6"/><path d="M21.500 4v12" stroke="#fff" stroke-width="1.800"/><path d="M21.500 0.500l2.800 4.500h-5.600z" fill="#fff"/></g>
<g transform="translate(887.77 173.48) scale(0.4682 0.5400)"><path d="M2.200 18h3v2.500h-3zM12 18h3l3.200-3v2.500l-3.200 3h-3z" fill="#efefef"/><path d="M2.2 4.6l3.7 -3.7h12.4l-3.7 3.7z" fill="#a9dcfb"/><path d="M14.600000000000001 4.6l3.7 -3.7v13.4l-3.7 3.7z" fill="#4fa3df"/><rect x="2.2" y="4.6" width="12.4" height="13.4" fill="#7cc6f6"/><path d="M5.200 14h6.800v4h-6.800z" fill="#3a4556"/><path d="M21.500 4v12" stroke="#fff" stroke-width="1.800"/><path d="M21.500 0.500l2.800 4.500h-5.600z" fill="#fff"/></g>
<rect x="868.300" y="190.700" width="52" height="17.600" rx="1" fill="#2d4d66" stroke="#2b86b8" stroke-width="1"/>
<path d="M873.500 194.500v9.500l2.300-2.200 1.500 3.300 1.600-.700-1.500-3.300h3.200z" fill="#f2f2f2"/>
<path d="M927.800 197.300l4.600 4.600M932.400 197.300l-4.600 4.600" stroke="#8e98a6" stroke-width=".800"/>
<rect x="868" y="211.2" width="81" height="17.5" fill="#2a3342" />
<rect x="868" y="231.1" width="81" height="17.5" fill="#2a3342" />
<rect x="868" y="251.1" width="81" height="17.5" fill="#2a3342" />
<rect x="868" y="271.3" width="81" height="17.5" fill="#2a3342" />
<rect x="868" y="291.3" width="81" height="17.5" fill="#2a3342" />
<rect x="868" y="317.7" width="81" height="17.5" fill="#2a3342" />
<path d="M872.300 214.500v10.500" stroke="#4fb2f0" stroke-width="1.300"/><path d="M873.500 219.800h5" stroke="#d0d5dc" stroke-width=".800"/><circle cx="878.500" cy="219.800" r=".900" fill="#d0d5dc"/>
<path d="M871.500 235.500l8.500-1.500v7.500l-6-2z" fill="#f5a660"/><path d="M871 244l6.500-6.500" stroke="#f2f2f2" stroke-width="1.100"/><path d="M879 236l-3.500.700 2.800 2.800z" fill="#f2f2f2"/><circle cx="871.300" cy="243.700" r="1.100" fill="#f2f2f2"/>
<path d="M870.700 255v10M880.300 255v10" stroke="#4fb2f0" stroke-width="1.300"/><path d="M872 260h7" stroke="#d0d5dc" stroke-width=".800"/><path d="M872 260l2-1.300v2.600zM879 260l-2-1.300v2.600z" fill="#d0d5dc"/>
<g transform="translate(869.8 320.8) scale(0.8)"><path d="M1 2.500c0-2.600 10-2.600 10 0v7c0 2.600-10 2.600-10 0z" fill="#6bbdf2"/><ellipse cx="6" cy="2.500" rx="5" ry="2" fill="#a9dcfb"/><path d="M6.500 10.500h7M10 7v7" stroke="#14b85c" stroke-width="2.400"/></g>
<path d="M941.7 219.0h3.6l-1.8 2.2z" fill="#c9ced6"/>
<path d="M941.7 238.9h3.6l-1.8 2.2z" fill="#c9ced6"/>
<path d="M941.7 258.9h3.6l-1.8 2.2z" fill="#c9ced6"/>
<path d="M941.7 325.7h3.6l-1.8 2.2z" fill="#c9ced6"/>
<rect x="808.3" y="313" width="161.4" height="0.7" fill="#46536a" />
<rect x="808.3" y="337.4" width="161.4" height="0.7" fill="#46536a" />
<circle cx="821.400" cy="349.700" r="4.600" fill="#8ea0b8"/><rect x="820.700" y="348.900" width="1.400" height="3.400" fill="#3a4556"/><circle cx="821.400" cy="347.400" r=".800" fill="#3a4556"/>
<rect x="865.500" y="342.200" width="28.200" height="14.600" rx="1" fill="#2f394a" stroke="#5d6a7d" stroke-width="1"/>
<rect x="907.300" y="342.200" width="53.500" height="14.600" rx="1" fill="#2f394a" stroke="#5d6a7d" stroke-width="1"/>
</svg>
<div class="t" style="left:361.46px;top:2px;font-size:8.66px;line-height:13px;color:#9c9193;font-weight:700;transform:scaleX(1.0352);transform-origin:0 50%;">FUISON for Interior v2* (Interior) -</div>
<div class="t" style="left:506.83px;top:2px;font-size:8.66px;line-height:13px;color:#9c9193;font-weight:700;transform:scaleX(0.9808);transform-origin:0 50%;">Autodesk Fusion</div>
<div class="t" style="left:578.58px;top:3px;font-size:7.89px;line-height:12px;color:#9c9193;font-weight:700;">(教育機関ライセンス)</div>
<div class="t" style="left:464.33px;top:25px;font-size:8.24px;line-height:12px;color:#f2f4f7;font-weight:700;transform:scaleX(0.9490);transform-origin:0 50%;">FUISON for Interior v2*</div>
<div class="t" style="left:975.42px;top:22px;font-size:6.92px;line-height:11px;color:#2a3240;font-weight:700;">?</div>
<div class="t" style="left:20.79px;top:58px;font-size:7.29px;line-height:11px;color:#f2f4f7;font-weight:700;">デザイン</div>
<div class="t" style="left:92.34px;top:40px;font-size:7.33px;line-height:11px;color:#f2f4f7;font-weight:700;">ソリッド</div>
<div class="t" style="left:149.65px;top:40px;font-size:6.97px;line-height:11px;color:#f2f4f7;font-weight:700;">サーフェス</div>
<div class="t" style="left:215.33px;top:40px;font-size:7.41px;line-height:11px;color:#f2f4f7;font-weight:700;">メッシュ</div>
<div class="t" style="left:272.43px;top:41px;font-size:7.13px;line-height:11px;color:#f2f4f7;font-weight:700;">シート メタル</div>
<div class="t" style="left:345.78px;top:41px;font-size:7.16px;line-height:11px;color:#f2f4f7;font-weight:700;">プラスチック</div>
<div class="t" style="left:418.86px;top:41px;font-size:7.14px;line-height:11px;color:#f2f4f7;font-weight:700;">管理</div>
<div class="t" style="left:463.00px;top:40px;font-size:7.19px;line-height:11px;color:#f2f4f7;font-weight:700;">ユーティリティ</div>
<div class="t" style="left:193.86px;top:80px;font-size:7.18px;line-height:11px;color:#eef0f3;font-weight:700;">作成</div>
<div class="t" style="left:465.93px;top:80px;font-size:7.18px;line-height:11px;color:#eef0f3;font-weight:700;">修正</div>
<div class="t" style="left:642.18px;top:80px;font-size:7.45px;line-height:11px;color:#eef0f3;font-weight:700;">アセンブリ</div>
<div class="t" style="left:718.50px;top:80px;font-size:7.17px;line-height:11px;color:#eef0f3;font-weight:700;">コンフィギュレーション</div>
<div class="t" style="left:821.86px;top:80px;font-size:7.14px;line-height:11px;color:#eef0f3;font-weight:700;">構築</div>
<div class="t" style="left:860.36px;top:80px;font-size:7.14px;line-height:11px;color:#eef0f3;font-weight:700;">検査</div>
<div class="t" style="left:909.36px;top:79px;font-size:6.89px;line-height:11px;color:#eef0f3;font-weight:700;">挿入</div>
<div class="t" style="left:960.86px;top:80px;font-size:7.11px;line-height:11px;color:#eef0f3;font-weight:700;">選択</div>
<div class="t" style="left:15.77px;top:99px;font-size:7.29px;line-height:11px;color:#f2f4f7;font-weight:700;">ブラウザ</div>
<div class="t" style="left:58.14px;top:117px;font-size:8.24px;line-height:12px;color:#ffffff;font-weight:700;transform:scaleX(0.9377);transform-origin:0 50%;">FUISON for Interior v2</div>
<div class="t" style="left:53.04px;top:132px;font-size:7.24px;line-height:11px;color:#f2f4f7;font-weight:700;">ドキュメントの設定</div>
<div class="t" style="left:54.26px;top:148px;font-size:7.15px;line-height:11px;color:#f2f4f7;font-weight:700;">名前の付いたビュー</div>
<div class="t" style="left:70.25px;top:163px;font-size:7.49px;line-height:11px;color:#f2f4f7;font-weight:700;">原点</div>
<div class="t" style="left:81.69px;top:178px;font-size:8.10px;line-height:12px;color:#f2f4f7;font-weight:700;transform:scaleX(0.9523);transform-origin:0 50%;">O</div>
<div class="t" style="left:82.00px;top:194px;font-size:8.10px;line-height:12px;color:#f2f4f7;font-weight:700;transform:scaleX(0.9352);transform-origin:0 50%;">X</div>
<div class="t" style="left:81.92px;top:209px;font-size:8.10px;line-height:12px;color:#f2f4f7;font-weight:700;transform:scaleX(0.9496);transform-origin:0 50%;">Y</div>
<div class="t" style="left:81.84px;top:225px;font-size:8.10px;line-height:12px;color:#f2f4f7;font-weight:700;">Z</div>
<div class="t" style="left:82.00px;top:241px;font-size:8.10px;line-height:12px;color:#f2f4f7;font-weight:700;transform:scaleX(0.9675);transform-origin:0 50%;">XY</div>
<div class="t" style="left:82.00px;top:256px;font-size:8.10px;line-height:12px;color:#f2f4f7;font-weight:700;transform:scaleX(0.9821);transform-origin:0 50%;">XZ</div>
<div class="t" style="left:81.92px;top:272px;font-size:8.10px;line-height:12px;color:#f2f4f7;font-weight:700;transform:scaleX(0.9900);transform-origin:0 50%;">YZ</div>
<div class="t" style="left:70.12px;top:287px;font-size:7.05px;line-height:11px;color:#f2f4f7;font-weight:700;font-style:italic;">ボディ</div>
<div class="t" style="left:81.78px;top:303px;font-size:7.25px;line-height:11px;color:#f2f4f7;font-weight:700;">ペン立て</div>
<div class="t" style="left:81.64px;top:318px;font-size:7.19px;line-height:11px;color:#f2f4f7;font-weight:700;">かびん</div>
<div class="t" style="left:81.71px;top:335px;font-size:7.16px;line-height:11px;color:#f2f4f7;font-weight:700;font-style:italic;">ボディ8</div>
<div class="t" style="left:81.71px;top:349px;font-size:7.18px;line-height:11px;color:#f2f4f7;font-weight:700;font-style:italic;">ボディ9</div>
<div class="t" style="left:69.90px;top:365px;font-size:7.15px;line-height:11px;color:#f2f4f7;font-weight:700;">スケッチ</div>
<div class="t" style="left:69.40px;top:381px;font-size:7.17px;line-height:11px;color:#f2f4f7;font-weight:700;">コンストラクション</div>
<div class="t" style="left:81.71px;top:395px;font-size:7.23px;line-height:11px;color:#f2f4f7;font-weight:700;">平面1</div>
<div class="t" style="left:15.76px;top:652px;font-size:7.45px;line-height:11px;color:#f2f4f7;font-weight:700;">コメント</div>
<div class="t" style="left:526.00px;top:397px;font-size:9.93px;line-height:14px;color:#33332f;font-weight:400;">384.00</div>
<div class="t" style="left:635.14px;top:539px;font-size:8.10px;line-height:12px;color:#ffffff;font-weight:700;transform:scaleX(1.0100);transform-origin:0 50%;">384.00 mm</div>
<div class="t" style="left:976.10px;top:100px;font-size:9.92px;line-height:14px;color:#7272ff;font-weight:700;transform:scaleX(1.0085);transform-origin:0 50%;">Z</div>
<div class="t" style="left:1008.12px;top:143px;font-size:9.78px;line-height:14px;color:#5ce882;font-weight:700;transform:scaleX(0.8025);transform-origin:0 50%;">Y</div>
<div class="t" style="left:826.26px;top:158px;font-size:7.10px;line-height:11px;color:#f2f4f7;font-weight:700;">押し出し</div>
<div class="t" style="left:816.27px;top:174px;font-size:7.20px;line-height:11px;color:#f2f4f7;font-weight:700;">タイプ</div>
<div class="t" style="left:815.99px;top:196px;font-size:7.12px;line-height:11px;color:#f2f4f7;font-weight:700;">プロファイル</div>
<div class="t" style="left:816.19px;top:215px;font-size:7.34px;line-height:11px;color:#f2f4f7;font-weight:700;">開始</div>
<div class="t" style="left:816.55px;top:235px;font-size:7.42px;line-height:11px;color:#f2f4f7;font-weight:700;">方向</div>
<div class="t" style="left:816.56px;top:255px;font-size:7.07px;line-height:11px;color:#f2f4f7;font-weight:700;">範囲のタイプ</div>
<div class="t" style="left:816.63px;top:275px;font-size:7.19px;line-height:11px;color:#f2f4f7;font-weight:700;">距離</div>
<div class="t" style="left:816.13px;top:296px;font-size:7.10px;line-height:11px;color:#f2f4f7;font-weight:700;">テーパ角度</div>
<div class="t" style="left:816.56px;top:321px;font-size:7.19px;line-height:11px;color:#f2f4f7;font-weight:700;">操作</div>
<div class="t" style="left:882.17px;top:195px;font-size:7.25px;line-height:11px;color:#f2f4f7;font-weight:700;">1 選択済み</div>
<div class="t" style="left:883.30px;top:215px;font-size:7.01px;line-height:11px;color:#f2f4f7;font-weight:700;">プロファイル平i...</div>
<div class="t" style="left:882.85px;top:235px;font-size:7.51px;line-height:12px;color:#f2f4f7;font-weight:700;">片側</div>
<div class="t" style="left:882.93px;top:255px;font-size:7.40px;line-height:11px;color:#f2f4f7;font-weight:700;">距離</div>
<div class="t" style="left:875.04px;top:275px;font-size:8.10px;line-height:12px;color:#f2f4f7;font-weight:700;transform:scaleX(1.0076);transform-origin:0 50%;">384.00 mm</div>
<div class="t" style="left:874.96px;top:294px;font-size:8.10px;line-height:12px;color:#f2f4f7;font-weight:700;">0.0 deg</div>
<div class="t" style="left:882.93px;top:321px;font-size:7.05px;line-height:11px;color:#f2f4f7;font-weight:700;">新規ボディ</div>
<div class="t" style="left:874.41px;top:344px;font-size:8.10px;line-height:12px;color:#f2f4f7;font-weight:700;transform:scaleX(0.8891);transform-origin:0 50%;">OK</div>
<div class="t" style="left:916.26px;top:345px;font-size:7.09px;line-height:11px;color:#f2f4f7;font-weight:700;">キャンセル</div>
<svg class="l" width="1024" height="699" viewBox="0 0 1024 699">
<ellipse cx="120" cy="60" rx="27" ry="28.500" fill="none" stroke="#ff12c8" stroke-width="3.200"/>
<ellipse cx="910.500" cy="325.600" rx="64" ry="18.300" fill="none" stroke="#ff12c8" stroke-width="3"/>
</svg>
</div></body></html>
